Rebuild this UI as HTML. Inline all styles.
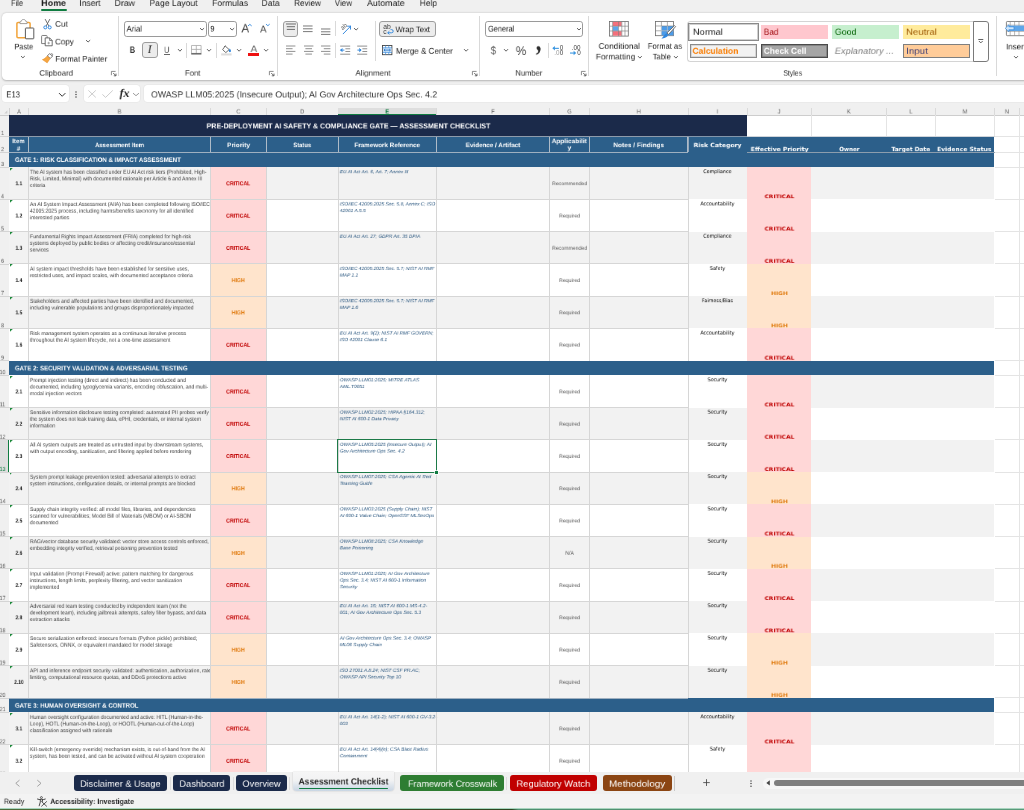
<!DOCTYPE html>
<html><head><meta charset="utf-8"><title>Assessment Checklist</title>
<style>
html,body{margin:0;padding:0;}
body{width:1024px;height:810px;overflow:hidden;background:#f0f0f0;font-family:"Liberation Sans",sans-serif;position:relative;color:#222;}
div,span,svg{position:absolute;box-sizing:border-box;}
svg{overflow:visible;}
.t{left:0;top:0;white-space:pre;line-height:1;transform-origin:0 0;will-change:transform;text-rendering:geometricPrecision;}
</style></head><body>
<!-- ===== ribbon / formula bar ===== -->
<div id="menubar" style="left:0;top:0;width:1024px;height:13px;background:#f0f0f0;"></div>
<span class="t" style="font-size:10.625px;color:#222;transform:translate(11.00px,-0.57px) scale(0.7072,0.8000);">File</span>
<span class="t" style="font-size:10.625px;color:#222;transform:translate(79.40px,-0.57px) scale(0.7986,0.8000);">Insert</span>
<span class="t" style="font-size:10.625px;color:#222;transform:translate(114.50px,-0.57px) scale(0.8278,0.8000);">Draw</span>
<span class="t" style="font-size:10.625px;color:#222;transform:translate(149.50px,-0.57px) scale(0.8055,0.8000);">Page Layout</span>
<span class="t" style="font-size:10.625px;color:#222;transform:translate(212.00px,-0.57px) scale(0.8141,0.8000);">Formulas</span>
<span class="t" style="font-size:10.625px;color:#222;transform:translate(261.50px,-0.57px) scale(0.8117,0.8000);">Data</span>
<span class="t" style="font-size:10.625px;color:#222;transform:translate(294.00px,-0.57px) scale(0.7759,0.8000);">Review</span>
<span class="t" style="font-size:10.625px;color:#222;transform:translate(334.70px,-0.57px) scale(0.7584,0.8000);">View</span>
<span class="t" style="font-size:10.625px;color:#222;transform:translate(367.00px,-0.57px) scale(0.8300,0.8000);">Automate</span>
<span class="t" style="font-size:10.625px;color:#222;transform:translate(419.70px,-0.57px) scale(0.7926,0.8000);">Help</span>
<span class="t" style="font-size:10.625px;color:#1e1e1e;font-weight:bold;transform:translate(41.20px,-0.57px) scale(0.8411,0.8000);">Home</span>
<div style="left:41.00px;top:8.60px;width:25.50px;height:2.20px;background:#107c41;border-radius:1.2px;"></div>
<div id="ribbon" style="left:1.5px;top:12.6px;width:1030px;height:67.2px;background:#fff;border-radius:4.5px 0 0 4.5px;box-shadow:0 0.6px 2px rgba(0,0,0,0.25);"></div>
<svg style="left:14.00px;top:17.50px;width:22.00px;height:23.00px" viewBox="0 0 22 23"><rect x="2.9" y="4.4" width="13.2" height="15.4" rx="1.2" fill="#fff" stroke="#f2a43a" stroke-width="1.5"/>
    <path d="M6 5.6V4.2C6 3.4 6.6 3.2 7.4 3.2C7.4 2 8.4 1.5 9.5 1.5C10.6 1.5 11.6 2 11.6 3.2C12.4 3.2 13 3.4 13 4.2V5.6Z" fill="#fff" stroke="#8a8a8a" stroke-width="0.8"/>
    <rect x="11.4" y="10" width="8.4" height="10.8" rx="0.6" fill="#fff" stroke="#5a5a5a" stroke-width="1"/></svg>
<span class="t" style="font-size:10.125px;color:#1c1c1c;transform:translate(14.50px,43.76px) scale(0.7193,0.8000);">Paste</span>
<svg style="left:21.20px;top:56.40px;width:3.80px;height:2.20px" viewBox="0 0 3.80 2.20"><path d="M0.3 0.4L1.90 1.80L3.50 0.4" fill="none" stroke="#444" stroke-width="0.85" stroke-linecap="round" stroke-linejoin="round"/></svg>
<svg style="left:42.50px;top:18.50px;width:9.00px;height:10.60px" viewBox="0 0 9 10.6"><path d="M2.3 0.4L5.6 6.6M6.7 0.4L3.4 6.6" stroke="#5a5a5a" stroke-width="0.85" fill="none" stroke-linecap="round"/>
    <circle cx="2.3" cy="8.4" r="1.5" fill="none" stroke="#2f86dd" stroke-width="1"/><circle cx="6.7" cy="8.4" r="1.5" fill="none" stroke="#2f86dd" stroke-width="1"/></svg>
<span class="t" style="font-size:10.125px;color:#1c1c1c;transform:translate(55.00px,20.96px) scale(0.8135,0.8000);">Cut</span>
<svg style="left:41.00px;top:35.40px;width:12.00px;height:11.40px" viewBox="0 0 12 11.4"><path d="M0.6 1.2C0.6 0.8 0.9 0.5 1.3 0.5H5.4C5.8 0.5 6.1 0.8 6.1 1.2V8.6H0.6Z" fill="#fff" stroke="#6a6a6a" stroke-width="0.85"/>
    <path d="M4.2 2.9H8.6L11.2 5.5V10.8H4.2Z" fill="#fff" stroke="#555" stroke-width="0.85" stroke-linejoin="round"/>
    <path d="M8.6 2.9V5.5H11.2" fill="none" stroke="#555" stroke-width="0.7"/><path d="M7.7 6.8V9.4M6.4 8.1H9" stroke="#777" stroke-width="0.6"/></svg>
<span class="t" style="font-size:10.125px;color:#1c1c1c;transform:translate(55.00px,38.76px) scale(0.7963,0.8000);">Copy</span>
<svg style="left:85.60px;top:40.20px;width:4.20px;height:2.40px" viewBox="0 0 4.20 2.40"><path d="M0.3 0.4L2.10 2.00L3.90 0.4" fill="none" stroke="#444" stroke-width="0.85" stroke-linecap="round" stroke-linejoin="round"/></svg>
<svg style="left:41.60px;top:53.20px;width:11.40px;height:10.40px" viewBox="0 0 11.4 10.4"><path d="M7.6 0.6L10.6 3.2L8.2 5.4L5.4 2.9Z" fill="#fff" stroke="#555" stroke-width="0.8" stroke-linejoin="round"/>
    <path d="M9 0.5L10.8 1.2L10.2 2.8" fill="none" stroke="#555" stroke-width="0.6"/>
    <path d="M5.2 3.1L8 5.6L5.2 9.8L0.5 6.6C2.4 6.2 3.8 4.8 5.2 3.1Z" fill="#f6a640" stroke="#e8902a" stroke-width="0.7" stroke-linejoin="round"/></svg>
<span class="t" style="font-size:10.125px;color:#1c1c1c;transform:translate(55.40px,55.96px) scale(0.7748,0.8000);">Format Painter</span>
<span class="t" style="font-size:9.75px;color:#2e2e2e;transform:translate(39.40px,69.97px) scale(0.8075,0.8000);">Clipboard</span>
<svg style="left:110.60px;top:70.80px;width:5.60px;height:5.20px" viewBox="0 0 5.6 5.2"><path d="M0.4 4.2V0.4H4.6" fill="none" stroke="#666" stroke-width="0.75"/><path d="M2.2 2L4.8 4.6M5 2.6V4.8H2.8" fill="none" stroke="#444" stroke-width="0.8"/></svg>
<div style="left:118.00px;top:16.30px;width:1.00px;height:59.30px;background:#d9d9d9;"></div>
<div style="left:124.20px;top:21.00px;width:82.40px;height:15.70px;border:1px solid #9a9a9a;border-radius:2.8px;background:#fff;"></div>
<span class="t" style="font-size:10.5px;color:#1c1c1c;transform:translate(126.60px,25.13px) scale(0.7328,0.8000);">Arial</span>
<svg style="left:200.20px;top:27.70px;width:4.10px;height:2.40px" viewBox="0 0 4.10 2.40"><path d="M0.3 0.4L2.05 2.00L3.80 0.4" fill="none" stroke="#444" stroke-width="0.85" stroke-linecap="round" stroke-linejoin="round"/></svg>
<div style="left:208.30px;top:21.00px;width:28.50px;height:15.70px;border:1px solid #9a9a9a;border-radius:2.8px;background:#fff;"></div>
<span class="t" style="font-size:10.5px;color:#1c1c1c;transform:translate(210.40px,25.13px) scale(0.6674,0.8000);">9</span>
<svg style="left:230.30px;top:27.70px;width:4.20px;height:2.40px" viewBox="0 0 4.20 2.40"><path d="M0.3 0.4L2.10 2.00L3.90 0.4" fill="none" stroke="#444" stroke-width="0.85" stroke-linecap="round" stroke-linejoin="round"/></svg>
<span class="t" style="font-size:15.25px;color:#444;transform:translate(241.40px,22.83px) scale(0.7668,0.8000);">A</span>
<svg style="left:248.40px;top:24.30px;width:3.70px;height:2.10px" viewBox="0 0 3.70 2.10"><path d="M0.3 1.70L1.85 0.4L3.40 1.70" fill="none" stroke="#2f86dd" stroke-width="0.90" stroke-linecap="round" stroke-linejoin="round"/></svg>
<span class="t" style="font-size:12.25px;color:#444;transform:translate(260.00px,24.47px) scale(0.7954,0.8000);">A</span>
<svg style="left:265.90px;top:24.30px;width:3.70px;height:2.10px" viewBox="0 0 3.70 2.10"><path d="M0.3 0.4L1.85 1.70L3.40 0.4" fill="none" stroke="#2f86dd" stroke-width="0.90" stroke-linecap="round" stroke-linejoin="round"/></svg>
<span class="t" style="font-size:11.75px;color:#3a3a3a;font-weight:bold;transform:translate(129.80px,45.68px) scale(0.6235,0.8000);">B</span>
<div style="left:141.50px;top:42.20px;width:16.50px;height:16.30px;border:1px solid #9c9c9c;border-radius:3px;background:#ececec;"></div>
<span class="t" style="font-size:14.375px;color:#222;font-style:italic;font-family:'Liberation Serif',serif;transform:translate(147.80px,44.11px) scale(0.7922,0.8000);">I</span>
<span class="t" style="font-size:11px;color:#555;transform:translate(164.00px,46.43px) scale(0.7041,0.8000);">U</span>
<div style="left:163.80px;top:54.00px;width:6.00px;height:0.80px;background:#666;"></div>
<svg style="left:177.70px;top:49.30px;width:3.90px;height:2.60px" viewBox="0 0 3.90 2.60"><path d="M0.3 0.4L1.95 2.20L3.60 0.4" fill="none" stroke="#444" stroke-width="0.85" stroke-linecap="round" stroke-linejoin="round"/></svg>
<div style="left:186.30px;top:42.80px;width:1.00px;height:15.00px;background:#d9d9d9;"></div>
<svg style="left:191.00px;top:45.30px;width:10.60px;height:9.60px" viewBox="0 0 10.6 9.6"><path d="M0.5 0.5H10.1V8.4H0.5ZM5.3 0.5V8.4M0.5 4.4H10.1" fill="none" stroke="#a8a8a8" stroke-width="0.8"/><path d="M0.2 8.9H10.4" stroke="#444" stroke-width="1.1"/></svg>
<svg style="left:207.00px;top:49.30px;width:4.10px;height:2.60px" viewBox="0 0 4.10 2.60"><path d="M0.3 0.4L2.05 2.20L3.80 0.4" fill="none" stroke="#444" stroke-width="0.85" stroke-linecap="round" stroke-linejoin="round"/></svg>
<div style="left:216.00px;top:42.80px;width:1.00px;height:15.00px;background:#d9d9d9;"></div>
<svg style="left:221.00px;top:44.80px;width:11.00px;height:10.60px" viewBox="0 0 11 10.6"><path d="M4.2 1L8.2 4.6L4.8 7.6L1.6 4.6Z" fill="#fff" stroke="#555" stroke-width="0.85" stroke-linejoin="round"/><path d="M3 2L4.6 0.6" stroke="#555" stroke-width="0.7"/>
    <path d="M8.8 3.6C9.6 4.8 10 5.5 10 6.1A1.1 1.1 0 0 1 7.8 6.1C7.8 5.5 8.2 4.8 8.8 3.6Z" fill="#2f86dd"/><rect x="0.2" y="8.4" width="10.4" height="2.1" fill="#dcdcdc"/></svg>
<svg style="left:236.60px;top:49.30px;width:4.20px;height:2.60px" viewBox="0 0 4.20 2.60"><path d="M0.3 0.4L2.10 2.20L3.90 0.4" fill="none" stroke="#444" stroke-width="0.85" stroke-linecap="round" stroke-linejoin="round"/></svg>
<span class="t" style="font-size:12px;color:#555;transform:translate(250.60px,44.12px) scale(0.8234,0.8000);">A</span>
<div style="left:248.30px;top:53.10px;width:10.80px;height:2.50px;background:#ee1111;"></div>
<svg style="left:264.10px;top:49.30px;width:4.20px;height:2.60px" viewBox="0 0 4.20 2.60"><path d="M0.3 0.4L2.10 2.20L3.90 0.4" fill="none" stroke="#444" stroke-width="0.85" stroke-linecap="round" stroke-linejoin="round"/></svg>
<span class="t" style="font-size:9.75px;color:#2e2e2e;transform:translate(184.90px,69.97px) scale(0.7994,0.8000);">Font</span>
<svg style="left:269.30px;top:70.80px;width:5.60px;height:5.20px" viewBox="0 0 5.6 5.2"><path d="M0.4 4.2V0.4H4.6" fill="none" stroke="#666" stroke-width="0.75"/><path d="M2.2 2L4.8 4.6M5 2.6V4.8H2.8" fill="none" stroke="#444" stroke-width="0.8"/></svg>
<div style="left:276.50px;top:16.30px;width:1.00px;height:59.30px;background:#d9d9d9;"></div>
<div style="left:282.90px;top:21.00px;width:15.60px;height:15.70px;border:1px solid #9c9c9c;border-radius:3px;background:#ececec;"></div>
<svg style="left:285.80px;top:23.00px;width:10.00px;height:7.40px" viewBox="0 0 10 7.4"><path d="M0.00 1.00H10.00" stroke="#555" stroke-width="0.85"/><path d="M0.80 3.70H9.00" stroke="#555" stroke-width="0.85"/><path d="M0.80 6.40H9.00" stroke="#555" stroke-width="0.85"/></svg>
<svg style="left:303.30px;top:24.70px;width:9.60px;height:7.60px" viewBox="0 0 9.6 7.6"><path d="M0.00 1.00H9.60" stroke="#6a6a6a" stroke-width="0.90"/><path d="M0.00 3.80H9.60" stroke="#6a6a6a" stroke-width="0.90"/><path d="M0.00 6.60H9.60" stroke="#6a6a6a" stroke-width="0.90"/></svg>
<svg style="left:321.00px;top:27.50px;width:9.40px;height:7.40px" viewBox="0 0 9.4 7.4"><path d="M0.00 1.00H9.40" stroke="#6a6a6a" stroke-width="0.90"/><path d="M0.00 3.80H9.40" stroke="#6a6a6a" stroke-width="0.90"/><path d="M0.00 6.40H9.40" stroke="#6a6a6a" stroke-width="0.90"/></svg>
<div style="left:334.90px;top:21.30px;width:1.00px;height:15.20px;background:#d9d9d9;"></div>
<svg style="left:339.60px;top:22.80px;width:11.40px;height:11.40px" viewBox="0 0 11.4 11.4"><text x="1" y="6" font-size="6.2" font-family="Liberation Sans, sans-serif" fill="#555" transform="rotate(-40 3.4 4.6)">ab</text>
    <path d="M3.2 10.8L10.4 3.4M10.5 3.2H7.5M10.5 3.2V6.2" fill="none" stroke="#2f86dd" stroke-width="0.95" stroke-linecap="round"/></svg>
<svg style="left:354.10px;top:27.70px;width:4.20px;height:2.40px" viewBox="0 0 4.20 2.40"><path d="M0.3 0.4L2.10 2.00L3.90 0.4" fill="none" stroke="#444" stroke-width="0.85" stroke-linecap="round" stroke-linejoin="round"/></svg>
<svg style="left:286.00px;top:45.10px;width:9.40px;height:10.10px" viewBox="0 0 9.4 10.1"><path d="M0.00 1.00H9.40" stroke="#8a8a8a" stroke-width="0.95"/><path d="M0.00 3.70H6.60" stroke="#8a8a8a" stroke-width="0.95"/><path d="M0.00 6.40H9.40" stroke="#8a8a8a" stroke-width="0.95"/><path d="M0.00 9.10H6.60" stroke="#8a8a8a" stroke-width="0.95"/></svg>
<svg style="left:303.50px;top:45.10px;width:9.40px;height:10.10px" viewBox="0 0 9.4 10.1"><path d="M0.00 1.00H9.40" stroke="#8a8a8a" stroke-width="0.95"/><path d="M1.40 3.70H8.00" stroke="#8a8a8a" stroke-width="0.95"/><path d="M0.00 6.40H9.40" stroke="#8a8a8a" stroke-width="0.95"/><path d="M1.40 9.10H8.00" stroke="#8a8a8a" stroke-width="0.95"/></svg>
<svg style="left:321.00px;top:45.10px;width:9.40px;height:10.10px" viewBox="0 0 9.4 10.1"><path d="M0.00 1.00H9.40" stroke="#8a8a8a" stroke-width="0.95"/><path d="M2.80 3.70H9.40" stroke="#8a8a8a" stroke-width="0.95"/><path d="M0.00 6.40H9.40" stroke="#8a8a8a" stroke-width="0.95"/><path d="M2.80 9.10H9.40" stroke="#8a8a8a" stroke-width="0.95"/></svg>
<div style="left:334.90px;top:42.80px;width:1.00px;height:15.00px;background:#d9d9d9;"></div>
<svg style="left:340.00px;top:45.00px;width:10.40px;height:10.20px" viewBox="0 0 10.4 10.2"><path d="M0.2 1.1H10.2M5.4 3.8H10.2M5.4 6.5H10.2M0.2 9.2H10.2" stroke="#8a8a8a" stroke-width="0.95"/>
    <path d="M4.4 5.1H0.7M2.2 3.5L0.6 5.1L2.2 6.7" fill="none" stroke="#2f86dd" stroke-width="0.95" stroke-linejoin="round"/><path d="M0.4 5.1L2.4 3.4V6.8Z" fill="#2f86dd"/></svg>
<svg style="left:357.40px;top:45.00px;width:10.40px;height:10.20px" viewBox="0 0 10.4 10.2"><path d="M0.2 1.1H10.2M5.4 3.8H10.2M5.4 6.5H10.2M0.2 9.2H10.2" stroke="#8a8a8a" stroke-width="0.95"/>
    <path d="M0.4 5.1H4M2.4 3.5L4.1 5.1L2.4 6.7" fill="none" stroke="#2f86dd" stroke-width="0.95"/><path d="M4.4 5.1L2.4 3.4V6.8Z" fill="#2f86dd"/></svg>
<div style="left:374.50px;top:20.60px;width:1.00px;height:40.60px;background:#d9d9d9;"></div>
<div style="left:379.30px;top:21.00px;width:57.20px;height:15.70px;border:1px solid #9c9c9c;border-radius:3px;background:#ececec;"></div>
<svg style="left:383.20px;top:24.00px;width:10.40px;height:10.80px" viewBox="0 0 10.4 10.8"><text x="0.2" y="5.2" font-size="6.8" font-family="Liberation Sans, sans-serif" fill="#3c3c3c">ab</text>
    <text x="0.2" y="10.2" font-size="6.8" font-family="Liberation Sans, sans-serif" fill="#3c3c3c">c</text>
    <path d="M7.6 5.6H8.6A1.5 1.5 0 0 1 8.6 8.8H4.8M6.4 7.2L4.7 8.8L6.4 10.4" fill="none" stroke="#2f86dd" stroke-width="0.95" stroke-linejoin="round"/></svg>
<span class="t" style="font-size:10.375px;color:#1c1c1c;transform:translate(395.60px,26.56px) scale(0.7435,0.8000);">Wrap Text</span>
<svg style="left:382.00px;top:44.80px;width:10.40px;height:10.20px" viewBox="0 0 10.4 10.2"><rect x="0.5" y="0.5" width="9.4" height="9.2" fill="#fff" stroke="#444" stroke-width="0.9"/>
    <rect x="0.9" y="3" width="8.6" height="4.2" fill="#cfe5fa"/>
    <path d="M0.5 2.8H9.9M0.5 7.4H9.9M3.6 0.5V2.8M6.8 0.5V2.8M3.6 7.4V9.7M6.8 7.4V9.7" fill="none" stroke="#2f86dd" stroke-width="0.7"/>
    <path d="M2 5.1H8.4M3.2 4L2 5.1L3.2 6.2M7.2 4L8.4 5.1L7.2 6.2" fill="none" stroke="#1e6fc4" stroke-width="0.8"/></svg>
<span class="t" style="font-size:10.375px;color:#1c1c1c;transform:translate(395.90px,48.06px) scale(0.7781,0.8000);">Merge &amp; Center</span>
<svg style="left:464.20px;top:49.30px;width:4.20px;height:2.60px" viewBox="0 0 4.20 2.60"><path d="M0.3 0.4L2.10 2.20L3.90 0.4" fill="none" stroke="#444" stroke-width="0.85" stroke-linecap="round" stroke-linejoin="round"/></svg>
<span class="t" style="font-size:9.75px;color:#2e2e2e;transform:translate(355.50px,69.97px) scale(0.8072,0.8000);">Alignment</span>
<svg style="left:472.20px;top:70.80px;width:5.60px;height:5.20px" viewBox="0 0 5.6 5.2"><path d="M0.4 4.2V0.4H4.6" fill="none" stroke="#666" stroke-width="0.75"/><path d="M2.2 2L4.8 4.6M5 2.6V4.8H2.8" fill="none" stroke="#444" stroke-width="0.8"/></svg>
<div style="left:478.90px;top:16.30px;width:1.00px;height:59.30px;background:#d9d9d9;"></div>
<div style="left:485.40px;top:21.00px;width:98.10px;height:15.70px;border:1px solid #9a9a9a;border-radius:2.8px;background:#fff;"></div>
<span class="t" style="font-size:10.5px;color:#1c1c1c;transform:translate(488.00px,25.13px) scale(0.7013,0.8000);">General</span>
<svg style="left:577.00px;top:27.70px;width:4.00px;height:2.40px" viewBox="0 0 4.00 2.40"><path d="M0.3 0.4L2.00 2.00L3.70 0.4" fill="none" stroke="#444" stroke-width="0.85" stroke-linecap="round" stroke-linejoin="round"/></svg>
<span class="t" style="font-size:14.25px;color:#444;transform:translate(490.80px,45.54px) scale(0.6551,0.8000);">$</span>
<svg style="left:503.80px;top:49.40px;width:4.10px;height:2.60px" viewBox="0 0 4.10 2.60"><path d="M0.3 0.4L2.05 2.20L3.80 0.4" fill="none" stroke="#444" stroke-width="0.85" stroke-linecap="round" stroke-linejoin="round"/></svg>
<span class="t" style="font-size:15.5px;color:#444;transform:translate(515.80px,45.33px) scale(0.7538,0.8000);">%</span>
<span class="t" style="font-size:36.25px;color:#2e2e2e;font-weight:bold;font-family:'Liberation Serif',serif;transform:translate(535.80px,26.40px) scale(0.6179,0.8000);">,</span>
<div style="left:547.80px;top:42.80px;width:1.00px;height:15.00px;background:#d9d9d9;"></div>
<svg style="left:552.00px;top:44.50px;width:12.00px;height:11.00px" viewBox="0 0 12 11"><path d="M6.9 3.35H1.2" fill="none" stroke="#3a96e0" stroke-width="1.1"/><path d="M0.3 3.35L2.9 1.1V5.6Z" fill="#3a96e0"/>
<text x="7.7" y="4.7" font-size="6.3" font-family="Liberation Sans, sans-serif" fill="#3c3c3c">0</text>
<text x="2.2" y="10.3" font-size="6.3" font-family="Liberation Sans, sans-serif" fill="#9a9a9a">.0</text><text x="7.7" y="10.3" font-size="6.3" font-family="Liberation Sans, sans-serif" fill="#3c3c3c">0</text></svg>
<svg style="left:570.00px;top:44.50px;width:12.00px;height:11.00px" viewBox="0 0 12 11"><text x="1.7" y="4.8" font-size="6.3" font-family="Liberation Sans, sans-serif" fill="#3c3c3c">.00</text>
<path d="M0 8.05H5" fill="none" stroke="#3a96e0" stroke-width="1.1"/><path d="M6.2 8.05L3.6 5.8V10.3Z" fill="#3a96e0"/>
<text x="7.3" y="10.3" font-size="6.3" font-family="Liberation Sans, sans-serif" fill="#3c3c3c">0</text></svg>
<span class="t" style="font-size:9.75px;color:#2e2e2e;transform:translate(515.40px,69.97px) scale(0.7755,0.8000);">Number</span>
<svg style="left:581.00px;top:70.80px;width:5.60px;height:5.20px" viewBox="0 0 5.6 5.2"><path d="M0.4 4.2V0.4H4.6" fill="none" stroke="#666" stroke-width="0.75"/><path d="M2.2 2L4.8 4.6M5 2.6V4.8H2.8" fill="none" stroke="#444" stroke-width="0.8"/></svg>
<div style="left:588.00px;top:16.30px;width:1.00px;height:59.30px;background:#d9d9d9;"></div>
<svg style="left:609.40px;top:20.50px;width:19.80px;height:15.60px" viewBox="0 0 19.8 15.6"><rect x="0.5" y="0.5" width="18.8" height="14.6" fill="#fff" stroke="#6a6a6a" stroke-width="0.8"/>
    <rect x="3.8" y="0.9" width="8.8" height="4.2" fill="#f4707c"/><rect x="3.8" y="5.4" width="5.6" height="4.4" fill="#5ea6ea"/><rect x="3.8" y="10.2" width="8.8" height="4.5" fill="#f4707c"/>
    <path d="M3.6 0.5V15.1M9.6 0.5V15.1M12.8 0.5V15.1M16 0.5V15.1M0.5 5.2H19.3M0.5 10H19.3" stroke="#7a7a7a" stroke-width="0.6" fill="none"/></svg>
<span class="t" style="font-size:10.125px;color:#1c1c1c;transform:translate(598.60px,43.11px) scale(0.8163,0.8000);">Conditional</span>
<span class="t" style="font-size:10.125px;color:#1c1c1c;transform:translate(595.80px,53.76px) scale(0.8173,0.8000);">Formatting</span>
<svg style="left:637.70px;top:55.60px;width:3.80px;height:2.50px" viewBox="0 0 3.80 2.50"><path d="M0.3 0.4L1.90 2.10L3.50 0.4" fill="none" stroke="#444" stroke-width="0.85" stroke-linecap="round" stroke-linejoin="round"/></svg>
<svg style="left:655.20px;top:20.50px;width:21.00px;height:18.60px" viewBox="0 0 21 18.6"><rect x="0.5" y="0.5" width="18" height="14.2" fill="#fff" stroke="#6a6a6a" stroke-width="0.8"/>
    <rect x="6.4" y="5" width="12" height="9.4" fill="#4c9be8"/>
    <path d="M6.4 0.5V14.7M12.4 0.5V14.7M0.5 5H18.5M0.5 9.8H18.5" stroke="#7a7a7a" stroke-width="0.6" fill="none"/>
    <path d="M6.4 5V14.4M12.4 5V14.4M6.4 9.8H18.4" stroke="#cfe5fa" stroke-width="0.5" fill="none"/>
    <path d="M19.6 4.6L20.6 5.6L13.6 13.4L11.8 12Z" fill="#fff" stroke="#555" stroke-width="0.8" stroke-linejoin="round"/>
    <path d="M13.2 13.6C12.6 16.4 9.6 17.8 6.4 17.4C8.6 16.2 8.8 13.4 11.4 12.2Z" fill="#2f86dd"/></svg>
<span class="t" style="font-size:10.125px;color:#1c1c1c;transform:translate(647.80px,43.11px) scale(0.7514,0.8000);">Format as</span>
<span class="t" style="font-size:10.125px;color:#1c1c1c;transform:translate(652.80px,53.76px) scale(0.7447,0.8000);">Table</span>
<svg style="left:673.60px;top:55.60px;width:3.80px;height:2.50px" viewBox="0 0 3.80 2.50"><path d="M0.3 0.4L1.90 2.10L3.50 0.4" fill="none" stroke="#444" stroke-width="0.85" stroke-linecap="round" stroke-linejoin="round"/></svg>
<div style="left:686.60px;top:21.20px;width:287.40px;height:41.00px;border:1px solid #d4d4d4;border-right:none;border-radius:3.5px 0 0 3.5px;background:#fff;"></div>
<div style="left:973.20px;top:21.00px;width:15.60px;height:41.30px;border:1px solid #7a7a7a;border-radius:0 3px 3px 0;background:#fff;"></div>
<svg style="left:977.80px;top:38.60px;width:5.60px;height:4.40px" viewBox="0 0 5.6 4.4"><path d="M0.3 0.5H5.3" stroke="#444" stroke-width="0.85"/><path d="M0.9 2L2.8 3.9L4.7 2" fill="none" stroke="#444" stroke-width="0.85" stroke-linejoin="round"/></svg>
<div style="left:687.60px;top:22.90px;width:71.20px;height:18.60px;border:1.2px solid #8a8a8a;background:#fff;box-shadow:inset 0 0 0 1px #d0d0d0;"></div>
<span class="t" style="font-size:10.875px;color:#222;transform:translate(692.90px,28.33px) scale(0.8571,0.8000);">Normal</span>
<div style="left:760.70px;top:25.00px;width:67.10px;height:14.40px;background:#ffc7ce;"></div>
<span class="t" style="font-size:10.875px;color:#9c0006;transform:translate(763.80px,28.33px) scale(0.7605,0.8000);">Bad</span>
<div style="left:831.90px;top:25.00px;width:67.10px;height:14.40px;background:#c6efce;"></div>
<span class="t" style="font-size:10.875px;color:#006100;transform:translate(834.80px,28.33px) scale(0.8165,0.8000);">Good</span>
<div style="left:903.20px;top:25.00px;width:67.20px;height:14.40px;background:#ffeb9c;"></div>
<span class="t" style="font-size:10.875px;color:#9c5700;transform:translate(906.00px,28.33px) scale(0.8825,0.8000);">Neutral</span>
<div style="left:689.50px;top:43.60px;width:67.50px;height:14.90px;border:1px solid #8a8a8a;background:#f2f2f2;box-shadow:inset 0 0 0 0.8px #cfcfcf;"></div>
<span class="t" style="font-size:10.875px;color:#fa7d00;font-weight:bold;transform:translate(692.50px,47.38px) scale(0.7825,0.8000);">Calculation</span>
<div style="left:760.70px;top:43.70px;width:67.10px;height:14.80px;border:1.6px solid #4a4a4a;background:#a5a5a5;box-shadow:inset 0 0 0 0.7px #7a7a7a;"></div>
<span class="t" style="font-size:10.875px;color:#fff;font-weight:bold;transform:translate(763.80px,47.38px) scale(0.7653,0.8000);">Check Cell</span>
<span class="t" style="font-size:10.875px;color:#7f7f7f;font-style:italic;transform:translate(834.80px,47.39px) scale(0.8499,0.8000);">Explanatory ...</span>
<div style="left:903.20px;top:43.70px;width:67.20px;height:14.80px;border:1px solid #7f7f7f;background:#ffcc99;"></div>
<span class="t" style="font-size:10.875px;color:#3f3f76;transform:translate(906.20px,47.38px) scale(0.8942,0.8000);">Input</span>
<span class="t" style="font-size:9.75px;color:#2e2e2e;transform:translate(783.30px,69.97px) scale(0.7040,0.8000);">Styles</span>
<div style="left:996.10px;top:16.30px;width:1.00px;height:59.30px;background:#d9d9d9;"></div>
<svg style="left:1005.00px;top:20.80px;width:20.00px;height:15.20px" viewBox="0 0 20 15.2"><rect x="1.4" y="0.5" width="19" height="14.2" rx="0.8" fill="#fff" stroke="#6a6a6a" stroke-width="0.8"/>
    <path d="M5.2 0.5V14.7M9.6 0.5V14.7M14 0.5V14.7M1.4 4.2H20M1.4 10.4H20" stroke="#8a8a8a" stroke-width="0.6" fill="none"/>
    <rect x="4" y="4.6" width="16" height="5.4" fill="#5ea6ea"/>
    <path d="M0.3 7.3L3.8 3.8V5.8H9V8.8H3.8V10.8Z" fill="#cfe5fa" stroke="#2f86dd" stroke-width="0.7" stroke-linejoin="round"/></svg>
<span class="t" style="font-size:10.125px;color:#1c1c1c;transform:translate(1006.00px,43.76px) scale(0.7906,0.8000);">Insert</span>
<svg style="left:1013.50px;top:56.00px;width:4.00px;height:2.50px" viewBox="0 0 4.00 2.50"><path d="M0.3 0.4L2.00 2.10L3.70 0.4" fill="none" stroke="#444" stroke-width="0.85" stroke-linecap="round" stroke-linejoin="round"/></svg>
<div style="left:1.60px;top:85.40px;width:67.70px;height:16.90px;background:#fff;border-radius:3.5px;box-shadow:0 0 0 0.6px #e4e4e4;"></div>
<span class="t" style="font-size:11.125px;color:#333;transform:translate(6.30px,91.02px) scale(0.6926,0.8000);">E13</span>
<svg style="left:58.80px;top:92.90px;width:6.40px;height:3.70px" viewBox="0 0 6.40 3.70"><path d="M0.3 0.4L3.20 3.30L6.10 0.4" fill="none" stroke="#333" stroke-width="1.00" stroke-linecap="round" stroke-linejoin="round"/></svg>
<svg style="left:75.40px;top:91.00px;width:2.00px;height:7.00px" viewBox="0 0 2 7"><circle cx="1" cy="0.9" r="0.75" fill="#444"/><circle cx="1" cy="3.5" r="0.75" fill="#444"/><circle cx="1" cy="6.1" r="0.75" fill="#444"/></svg>
<div style="left:83.70px;top:85.40px;width:56.60px;height:16.90px;background:#fff;border-radius:3.5px;box-shadow:0 0 0 0.6px #e4e4e4;"></div>
<svg style="left:87.80px;top:90.40px;width:8.20px;height:7.80px" viewBox="0 0 8.2 7.8"><path d="M0.4 0.4L7.8 7.4M7.8 0.4L0.4 7.4" stroke="#c6c6c6" stroke-width="0.9"/></svg>
<svg style="left:102.20px;top:90.40px;width:11.20px;height:7.80px" viewBox="0 0 11.2 7.8"><path d="M0.4 4.4L3.6 7.4L10.8 0.4" fill="none" stroke="#c6c6c6" stroke-width="0.9"/></svg>
<span class="t" style="font-size:14.5px;color:#222;font-weight:bold;font-style:italic;font-family:'Liberation Serif',serif;transform:translate(119.60px,88.15px) scale(0.8103,0.8000);">fx</span>
<svg style="left:132.90px;top:92.90px;width:6.00px;height:3.10px" viewBox="0 0 6.00 3.10"><path d="M0.3 0.4L3.00 2.70L5.70 0.4" fill="none" stroke="#8a8a8a" stroke-width="0.85" stroke-linecap="round" stroke-linejoin="round"/></svg>
<div style="left:144.00px;top:85.40px;width:896.00px;height:16.90px;background:#fff;border-radius:3.5px;box-shadow:0 0 0 0.6px #e4e4e4;"></div>
<span class="t" style="font-size:11.125px;color:#333;transform:translate(151.00px,91.02px) scale(0.7869,0.8000);">OWASP LLM05:2025 (Insecure Output); AI Gov Architecture Ops Sec. 4.2</span>
<!-- ===== grid ===== -->
<div id="gridclip" style="left:0;top:103px;width:1024px;height:669.4px;overflow:hidden;"><div style="left:0;top:-103px;width:1024px;height:810px;">
<div style="left:0.00px;top:103.00px;width:1024.00px;height:669.40px;background:#fff;"></div>
<div style="left:0.00px;top:103.00px;width:1024.00px;height:12.30px;background:#f0f0f0;"></div>
<div style="left:0.00px;top:115.00px;width:9.40px;height:657.40px;background:#f0f0f0;"></div>
<svg style="left:4.00px;top:109.60px;width:3.60px;height:3.80px" viewBox="0 0 3.6 3.8"><path d="M3.4 0.2V3.6H0.2Z" fill="#cfcfcf"/></svg>
<span class="t" style="font-size:7.5px;color:#5e5e5e;transform:translate(17.09px,108.70px) scale(0.7600,0.8000);">A</span>
<div style="left:28.10px;top:108.40px;width:1.00px;height:6.90px;background:#dadada;"></div>
<span class="t" style="font-size:7.5px;color:#5e5e5e;transform:translate(117.64px,108.70px) scale(0.7600,0.8000);">B</span>
<div style="left:210.00px;top:108.40px;width:1.00px;height:6.90px;background:#dadada;"></div>
<span class="t" style="font-size:7.5px;color:#5e5e5e;transform:translate(236.44px,108.70px) scale(0.7600,0.8000);">C</span>
<div style="left:266.00px;top:108.40px;width:1.00px;height:6.90px;background:#dadada;"></div>
<span class="t" style="font-size:7.5px;color:#5e5e5e;transform:translate(300.19px,108.70px) scale(0.7600,0.8000);">D</span>
<div style="left:337.50px;top:108.40px;width:1.00px;height:6.90px;background:#dadada;"></div>
<div style="left:338.00px;top:107.60px;width:98.50px;height:7.70px;background:#dedede;border-bottom:1.2px solid #107c41;"></div>
<span class="t" style="font-size:7.5px;color:#107c41;font-weight:bold;transform:translate(385.34px,108.69px) scale(0.7600,0.8000);">E</span>
<div style="left:436.00px;top:108.40px;width:1.00px;height:6.90px;background:#dadada;"></div>
<span class="t" style="font-size:7.5px;color:#5e5e5e;transform:translate(491.25px,108.70px) scale(0.7600,0.8000);">F</span>
<div style="left:549.00px;top:108.40px;width:1.00px;height:6.90px;background:#dadada;"></div>
<span class="t" style="font-size:7.5px;color:#5e5e5e;transform:translate(567.28px,108.70px) scale(0.7600,0.8000);">G</span>
<div style="left:589.00px;top:108.40px;width:1.00px;height:6.90px;background:#dadada;"></div>
<span class="t" style="font-size:7.5px;color:#5e5e5e;transform:translate(636.69px,108.70px) scale(0.7600,0.8000);">H</span>
<div style="left:687.50px;top:108.40px;width:1.00px;height:6.90px;background:#dadada;"></div>
<span class="t" style="font-size:7.5px;color:#5e5e5e;transform:translate(716.70px,108.70px) scale(0.7600,0.8000);">I</span>
<div style="left:746.50px;top:108.40px;width:1.00px;height:6.90px;background:#dadada;"></div>
<span class="t" style="font-size:7.5px;color:#5e5e5e;transform:translate(777.68px,108.70px) scale(0.7600,0.8000);">J</span>
<div style="left:810.70px;top:108.40px;width:1.00px;height:6.90px;background:#dadada;"></div>
<span class="t" style="font-size:7.5px;color:#5e5e5e;transform:translate(846.94px,108.70px) scale(0.7600,0.8000);">K</span>
<div style="left:886.00px;top:108.40px;width:1.00px;height:6.90px;background:#dadada;"></div>
<span class="t" style="font-size:7.5px;color:#5e5e5e;transform:translate(909.41px,108.70px) scale(0.7600,0.8000);">L</span>
<div style="left:935.00px;top:108.40px;width:1.00px;height:6.90px;background:#dadada;"></div>
<span class="t" style="font-size:7.5px;color:#5e5e5e;transform:translate(962.62px,108.70px) scale(0.7600,0.8000);">M</span>
<div style="left:994.00px;top:108.40px;width:1.00px;height:6.90px;background:#dadada;"></div>
<span class="t" style="font-size:7.5px;color:#5e5e5e;transform:translate(1004.89px,108.70px) scale(0.7600,0.8000);">N</span>
<div style="left:1018.90px;top:108.40px;width:1.00px;height:6.90px;background:#dadada;"></div>
<div style="left:8.90px;top:108.40px;width:1.00px;height:6.90px;background:#d2d2d2;"></div>
<div style="left:0.00px;top:114.90px;width:1024.00px;height:0.70px;background:#cdcdcd;"></div>
<span class="t" style="font-size:7.5px;color:#5a5a5a;transform:translate(1.00px,130.30px) scale(0.7200,0.8000);">1</span>
<div style="left:0.00px;top:135.80px;width:9.40px;height:0.80px;background:#d4d4d4;"></div>
<span class="t" style="font-size:7.5px;color:#5a5a5a;transform:translate(1.00px,146.40px) scale(0.7200,0.8000);">2</span>
<div style="left:0.00px;top:151.90px;width:9.40px;height:0.80px;background:#d4d4d4;"></div>
<span class="t" style="font-size:7.5px;color:#5a5a5a;transform:translate(1.00px,161.20px) scale(0.7200,0.8000);">3</span>
<div style="left:0.00px;top:166.70px;width:9.40px;height:0.80px;background:#d4d4d4;"></div>
<span class="t" style="font-size:7.5px;color:#5a5a5a;transform:translate(1.00px,193.47px) scale(0.7200,0.8000);">4</span>
<div style="left:0.00px;top:198.97px;width:9.40px;height:0.80px;background:#d4d4d4;"></div>
<span class="t" style="font-size:7.5px;color:#5a5a5a;transform:translate(1.00px,225.74px) scale(0.7200,0.8000);">5</span>
<div style="left:0.00px;top:231.24px;width:9.40px;height:0.80px;background:#d4d4d4;"></div>
<span class="t" style="font-size:7.5px;color:#5a5a5a;transform:translate(1.00px,258.01px) scale(0.7200,0.8000);">6</span>
<div style="left:0.00px;top:263.51px;width:9.40px;height:0.80px;background:#d4d4d4;"></div>
<span class="t" style="font-size:7.5px;color:#5a5a5a;transform:translate(1.00px,290.28px) scale(0.7200,0.8000);">7</span>
<div style="left:0.00px;top:295.78px;width:9.40px;height:0.80px;background:#d4d4d4;"></div>
<span class="t" style="font-size:7.5px;color:#5a5a5a;transform:translate(1.00px,322.55px) scale(0.7200,0.8000);">8</span>
<div style="left:0.00px;top:328.05px;width:9.40px;height:0.80px;background:#d4d4d4;"></div>
<span class="t" style="font-size:7.5px;color:#5a5a5a;transform:translate(1.00px,354.82px) scale(0.7200,0.8000);">9</span>
<div style="left:0.00px;top:360.32px;width:9.40px;height:0.80px;background:#d4d4d4;"></div>
<span class="t" style="font-size:7.5px;color:#5a5a5a;transform:translate(-0.50px,369.37px) scale(0.7200,0.8000);">10</span>
<div style="left:0.00px;top:374.87px;width:9.40px;height:0.80px;background:#d4d4d4;"></div>
<span class="t" style="font-size:7.5px;color:#5a5a5a;transform:translate(-0.31px,401.64px) scale(0.7200,0.8000);">11</span>
<div style="left:0.00px;top:407.14px;width:9.40px;height:0.80px;background:#d4d4d4;"></div>
<span class="t" style="font-size:7.5px;color:#5a5a5a;transform:translate(-0.50px,433.91px) scale(0.7200,0.8000);">12</span>
<div style="left:0.00px;top:439.41px;width:9.40px;height:0.80px;background:#d4d4d4;"></div>
<div style="left:0.00px;top:439.81px;width:9.40px;height:32.27px;background:#dedede;border-right:1.2px solid #107c41;"></div>
<span class="t" style="font-size:7.5px;color:#107c41;transform:translate(-0.50px,466.18px) scale(0.7200,0.8000);">13</span>
<div style="left:0.00px;top:471.68px;width:9.40px;height:0.80px;background:#d4d4d4;"></div>
<span class="t" style="font-size:7.5px;color:#5a5a5a;transform:translate(-0.50px,498.45px) scale(0.7200,0.8000);">14</span>
<div style="left:0.00px;top:503.95px;width:9.40px;height:0.80px;background:#d4d4d4;"></div>
<span class="t" style="font-size:7.5px;color:#5a5a5a;transform:translate(-0.50px,530.72px) scale(0.7200,0.8000);">15</span>
<div style="left:0.00px;top:536.22px;width:9.40px;height:0.80px;background:#d4d4d4;"></div>
<span class="t" style="font-size:7.5px;color:#5a5a5a;transform:translate(-0.50px,562.99px) scale(0.7200,0.8000);">16</span>
<div style="left:0.00px;top:568.49px;width:9.40px;height:0.80px;background:#d4d4d4;"></div>
<span class="t" style="font-size:7.5px;color:#5a5a5a;transform:translate(-0.50px,595.26px) scale(0.7200,0.8000);">17</span>
<div style="left:0.00px;top:600.76px;width:9.40px;height:0.80px;background:#d4d4d4;"></div>
<span class="t" style="font-size:7.5px;color:#5a5a5a;transform:translate(-0.50px,627.53px) scale(0.7200,0.8000);">18</span>
<div style="left:0.00px;top:633.03px;width:9.40px;height:0.80px;background:#d4d4d4;"></div>
<span class="t" style="font-size:7.5px;color:#5a5a5a;transform:translate(-0.50px,659.80px) scale(0.7200,0.8000);">19</span>
<div style="left:0.00px;top:665.30px;width:9.40px;height:0.80px;background:#d4d4d4;"></div>
<span class="t" style="font-size:7.5px;color:#5a5a5a;transform:translate(-0.50px,692.07px) scale(0.7200,0.8000);">20</span>
<div style="left:0.00px;top:697.57px;width:9.40px;height:0.80px;background:#d4d4d4;"></div>
<span class="t" style="font-size:7.5px;color:#5a5a5a;transform:translate(-0.50px,706.37px) scale(0.7200,0.8000);">21</span>
<div style="left:0.00px;top:711.87px;width:9.40px;height:0.80px;background:#d4d4d4;"></div>
<span class="t" style="font-size:7.5px;color:#5a5a5a;transform:translate(-0.50px,738.64px) scale(0.7200,0.8000);">22</span>
<div style="left:0.00px;top:744.14px;width:9.40px;height:0.80px;background:#d4d4d4;"></div>
<span class="t" style="font-size:7.5px;color:#5a5a5a;transform:translate(-0.50px,770.91px) scale(0.7200,0.8000);">23</span>
<div style="left:0.00px;top:776.41px;width:9.40px;height:0.80px;background:#d4d4d4;"></div>
<div style="left:9.00px;top:115.30px;width:0.80px;height:657.10px;background:#cdcdcd;"></div>
<div style="left:810.70px;top:115.30px;width:1.00px;height:20.90px;background:#e4e4e4;"></div>
<div style="left:886.00px;top:115.30px;width:1.00px;height:20.90px;background:#e4e4e4;"></div>
<div style="left:935.00px;top:115.30px;width:1.00px;height:20.90px;background:#e4e4e4;"></div>
<div style="left:994.00px;top:115.30px;width:1.00px;height:20.90px;background:#e4e4e4;"></div>
<div style="left:1018.90px;top:115.30px;width:1.00px;height:20.90px;background:#e4e4e4;"></div>
<div style="left:1018.90px;top:115.30px;width:1.00px;height:657.10px;background:#e4e4e4;"></div>
<div style="left:994.50px;top:135.70px;width:29.50px;height:1.00px;background:#e4e4e4;"></div>
<div style="left:994.50px;top:151.80px;width:29.50px;height:1.00px;background:#e4e4e4;"></div>
<div style="left:994.50px;top:166.60px;width:29.50px;height:1.00px;background:#e4e4e4;"></div>
<div style="left:994.50px;top:198.87px;width:29.50px;height:1.00px;background:#e4e4e4;"></div>
<div style="left:994.50px;top:231.14px;width:29.50px;height:1.00px;background:#e4e4e4;"></div>
<div style="left:994.50px;top:263.41px;width:29.50px;height:1.00px;background:#e4e4e4;"></div>
<div style="left:994.50px;top:295.68px;width:29.50px;height:1.00px;background:#e4e4e4;"></div>
<div style="left:994.50px;top:327.95px;width:29.50px;height:1.00px;background:#e4e4e4;"></div>
<div style="left:994.50px;top:360.22px;width:29.50px;height:1.00px;background:#e4e4e4;"></div>
<div style="left:994.50px;top:374.77px;width:29.50px;height:1.00px;background:#e4e4e4;"></div>
<div style="left:994.50px;top:407.04px;width:29.50px;height:1.00px;background:#e4e4e4;"></div>
<div style="left:994.50px;top:439.31px;width:29.50px;height:1.00px;background:#e4e4e4;"></div>
<div style="left:994.50px;top:471.58px;width:29.50px;height:1.00px;background:#e4e4e4;"></div>
<div style="left:994.50px;top:503.85px;width:29.50px;height:1.00px;background:#e4e4e4;"></div>
<div style="left:994.50px;top:536.12px;width:29.50px;height:1.00px;background:#e4e4e4;"></div>
<div style="left:994.50px;top:568.39px;width:29.50px;height:1.00px;background:#e4e4e4;"></div>
<div style="left:994.50px;top:600.66px;width:29.50px;height:1.00px;background:#e4e4e4;"></div>
<div style="left:994.50px;top:632.93px;width:29.50px;height:1.00px;background:#e4e4e4;"></div>
<div style="left:994.50px;top:665.20px;width:29.50px;height:1.00px;background:#e4e4e4;"></div>
<div style="left:994.50px;top:697.47px;width:29.50px;height:1.00px;background:#e4e4e4;"></div>
<div style="left:994.50px;top:711.77px;width:29.50px;height:1.00px;background:#e4e4e4;"></div>
<div style="left:994.50px;top:744.04px;width:29.50px;height:1.00px;background:#e4e4e4;"></div>
<div style="left:9.40px;top:115.30px;width:737.60px;height:21.20px;background:#1b2a4a;"></div>
<span class="t" style="font-size:9px;color:#fff;font-weight:bold;transform:translate(206.60px,122.78px) scale(0.7850,0.8000);">PRE-DEPLOYMENT AI SAFETY &amp; COMPLIANCE GATE — ASSESSMENT CHECKLIST</span>
<div style="left:9.40px;top:136.20px;width:985.10px;height:16.10px;background:#2c5f8a;"></div>
<span class="t" style="font-size:8.125px;color:#fff;font-weight:bold;transform:translate(95.05px,142.39px) scale(0.7344,0.8000);">Assessment Item</span>
<span class="t" style="font-size:8.125px;color:#fff;font-weight:bold;transform:translate(227.05px,142.39px) scale(0.8062,0.8000);">Priority</span>
<span class="t" style="font-size:8.125px;color:#fff;font-weight:bold;transform:translate(293.35px,142.39px) scale(0.7178,0.8000);">Status</span>
<span class="t" style="font-size:8.125px;color:#fff;font-weight:bold;transform:translate(354.45px,142.39px) scale(0.7740,0.8000);">Framework Reference</span>
<span class="t" style="font-size:8.125px;color:#fff;font-weight:bold;transform:translate(465.70px,142.39px) scale(0.7748,0.8000);">Evidence / Artifact</span>
<span class="t" style="font-size:8.125px;color:#fff;font-weight:bold;transform:translate(613.35px,142.39px) scale(0.8054,0.8000);">Notes / Findings</span>
<span class="t" style="font-size:8.125px;color:#fff;font-weight:bold;transform:translate(12.20px,138.39px) scale(0.7491,0.8000);">Item</span>
<span class="t" style="font-size:8.125px;color:#fff;font-weight:bold;transform:translate(16.80px,145.99px) scale(0.7972,0.8000);">#</span>
<span class="t" style="font-size:8.125px;color:#fff;font-weight:bold;transform:translate(551.70px,138.39px) scale(0.8031,0.8000);">Applicabilit</span>
<span class="t" style="font-size:8.125px;color:#fff;font-weight:bold;transform:translate(567.60px,144.99px) scale(0.8194,0.8000);">y</span>
<div style="left:28.10px;top:136.20px;width:1.00px;height:16.10px;background:#aebbc8;"></div>
<div style="left:210.00px;top:136.20px;width:1.00px;height:16.10px;background:#aebbc8;"></div>
<div style="left:266.00px;top:136.20px;width:1.00px;height:16.10px;background:#aebbc8;"></div>
<div style="left:337.50px;top:136.20px;width:1.00px;height:16.10px;background:#aebbc8;"></div>
<div style="left:436.00px;top:136.20px;width:1.00px;height:16.10px;background:#aebbc8;"></div>
<div style="left:549.00px;top:136.20px;width:1.00px;height:16.10px;background:#aebbc8;"></div>
<div style="left:589.00px;top:136.20px;width:1.00px;height:16.10px;background:#aebbc8;"></div>
<div style="left:686.60px;top:136.20px;width:0.90px;height:16.10px;background:#aebbc8;"></div>
<div style="left:688.10px;top:136.20px;width:0.80px;height:16.10px;background:#93a7ba;"></div>
<div style="left:9.40px;top:135.80px;width:678.60px;height:0.90px;background:#8f9bab;"></div>
<div style="left:9.40px;top:151.80px;width:678.60px;height:0.90px;background:#a3b3c2;"></div>
<div style="left:688.00px;top:136.00px;width:59.00px;height:0.80px;background:#8496ab;"></div>
<span class="t" style="font-size:7.375px;color:#fff;font-weight:bold;font-family:'DejaVu Sans','Liberation Sans',sans-serif;transform:translate(693.60px,142.39px) scale(0.8325,0.8000);">Risk Category</span>
<span class="t" style="font-size:7.375px;color:#fff;font-weight:bold;font-family:'DejaVu Sans','Liberation Sans',sans-serif;transform:translate(750.70px,146.39px) scale(0.8294,0.8000);">Effective Priority</span>
<span class="t" style="font-size:7.375px;color:#fff;font-weight:bold;font-family:'DejaVu Sans','Liberation Sans',sans-serif;transform:translate(839.20px,146.39px) scale(0.7540,0.8000);">Owner</span>
<span class="t" style="font-size:7.375px;color:#fff;font-weight:bold;font-family:'DejaVu Sans','Liberation Sans',sans-serif;transform:translate(891.40px,146.39px) scale(0.8005,0.8000);">Target Date</span>
<span class="t" style="font-size:7.375px;color:#fff;font-weight:bold;font-family:'DejaVu Sans','Liberation Sans',sans-serif;transform:translate(937.10px,146.39px) scale(0.8142,0.8000);">Evidence Status</span>
<div style="left:747.00px;top:151.90px;width:277.00px;height:0.80px;background:#8c9dad;"></div>
<div style="left:994.50px;top:151.80px;width:29.50px;height:1.00px;background:#e4e4e4;"></div>
<div style="left:747.00px;top:135.70px;width:277.00px;height:1.00px;background:#e4e4e4;"></div>
<div style="left:747.00px;top:135.60px;width:247.50px;height:0.90px;background:#cfd4da;"></div>
<div style="left:9.40px;top:152.30px;width:985.10px;height:14.80px;background:#2c5f8a;"></div>
<div style="left:9.40px;top:151.85px;width:678.60px;height:0.90px;background:#9fb0c0;"></div>
<span class="t" style="font-size:8.125px;color:#fff;font-weight:bold;transform:translate(14.90px,157.14px) scale(0.7494,0.8000);">GATE 1: RISK CLASSIFICATION &amp; IMPACT ASSESSMENT</span>
<div style="left:9.40px;top:360.72px;width:985.10px;height:14.55px;background:#2c5f8a;"></div>
<div style="left:9.40px;top:360.27px;width:678.60px;height:0.90px;background:#9fb0c0;"></div>
<span class="t" style="font-size:8.125px;color:#fff;font-weight:bold;transform:translate(14.90px,365.56px) scale(0.7472,0.8000);">GATE 2: SECURITY VALIDATION &amp; ADVERSARIAL TESTING</span>
<div style="left:9.40px;top:697.97px;width:985.10px;height:14.30px;background:#2c5f8a;"></div>
<div style="left:9.40px;top:697.52px;width:678.60px;height:0.90px;background:#9fb0c0;"></div>
<span class="t" style="font-size:8.125px;color:#fff;font-weight:bold;transform:translate(14.90px,702.81px) scale(0.7523,0.8000);">GATE 3: HUMAN OVERSIGHT &amp; CONTROL</span>
<div style="left:747.00px;top:151.85px;width:247.50px;height:0.90px;background:#8c9dad;"></div>
<div style="left:9.40px;top:167.10px;width:985.10px;height:32.27px;background:#f2f2f2;"></div>
<div style="left:811.20px;top:167.10px;width:183.30px;height:32.27px;background:#f2f2f2;"></div>
<div style="left:210.50px;top:167.10px;width:56.00px;height:32.27px;background:#ffd7d7;"></div>
<div style="left:747.00px;top:167.10px;width:64.20px;height:32.27px;background:#ffd7d7;"></div>
<svg style="left:9.60px;top:167.50px;width:3.00px;height:3.00px" viewBox="0 0 3 3"><path d="M0 0H2.8L0 2.8Z" fill="#1e8a3c"/></svg>
<span class="t" style="font-size:6.875px;color:#222;font-weight:bold;transform:translate(15.54px,182.03px) scale(0.7040,0.8000);">1.1</span>
<span class="t" style="font-size:6.875px;color:#3c3c3c;transform:translate(29.90px,170.51px) scale(0.7456,0.8000);">The AI system has been classified under EU AI Act risk tiers (Prohibited, High-</span>
<span class="t" style="font-size:6.875px;color:#3c3c3c;transform:translate(29.90px,177.16px) scale(0.7456,0.8000);">Risk, Limited, Minimal) with documented rationale per Article 6 and Annex III</span>
<span class="t" style="font-size:6.875px;color:#3c3c3c;transform:translate(29.90px,183.81px) scale(0.7456,0.8000);">criteria</span>
<span class="t" style="font-size:7.125px;color:#c00000;font-weight:bold;transform:translate(226.01px,181.35px) scale(0.7344,0.8000);">CRITICAL</span>
<span class="t" style="font-size:5.9375px;color:#1f4e79;font-style:italic;transform:translate(339.80px,170.82px) scale(0.8128,0.8000);">EU AI Act Art. 6, Art. 7; Annex III</span>
<span class="t" style="font-size:6.5px;color:#555;transform:translate(552.15px,181.99px) scale(0.7920,0.8000);">Recommended</span>
<span class="t" style="font-size:6.5px;color:#000;font-family:'DejaVu Sans','Liberation Sans',sans-serif;transform:translate(703.37px,169.16px) scale(0.7360,0.8000);">Compliance</span>
<span class="t" style="font-size:6.25px;color:#c00000;font-weight:bold;font-family:'DejaVu Sans','Liberation Sans',sans-serif;transform:translate(764.60px,195.00px) scale(0.9328,0.8000);">CRITICAL</span>
<div style="left:9.40px;top:199.37px;width:985.10px;height:32.27px;background:#ffffff;"></div>
<div style="left:811.20px;top:199.37px;width:183.30px;height:32.27px;background:#ffffff;"></div>
<div style="left:210.50px;top:199.37px;width:56.00px;height:32.27px;background:#ffd7d7;"></div>
<div style="left:747.00px;top:199.37px;width:64.20px;height:32.27px;background:#ffd7d7;"></div>
<svg style="left:9.60px;top:199.77px;width:3.00px;height:3.00px" viewBox="0 0 3 3"><path d="M0 0H2.8L0 2.8Z" fill="#1e8a3c"/></svg>
<span class="t" style="font-size:6.875px;color:#222;font-weight:bold;transform:translate(15.54px,214.30px) scale(0.7040,0.8000);">1.2</span>
<span class="t" style="font-size:6.875px;color:#3c3c3c;transform:translate(29.90px,202.78px) scale(0.7456,0.8000);">An AI System Impact Assessment (AIIA) has been completed following ISO/IEC</span>
<span class="t" style="font-size:6.875px;color:#3c3c3c;transform:translate(29.90px,209.43px) scale(0.7456,0.8000);">42005:2025 process, including harms/benefits taxonomy for all identified</span>
<span class="t" style="font-size:6.875px;color:#3c3c3c;transform:translate(29.90px,216.08px) scale(0.7456,0.8000);">interested parties</span>
<span class="t" style="font-size:7.125px;color:#c00000;font-weight:bold;transform:translate(226.01px,213.62px) scale(0.7344,0.8000);">CRITICAL</span>
<span class="t" style="font-size:5.9375px;color:#1f4e79;font-style:italic;transform:translate(339.80px,203.09px) scale(0.8128,0.8000);">ISO/IEC 42005:2025 Sec. 5.8, Annex C; ISO</span>
<span class="t" style="font-size:5.9375px;color:#1f4e79;font-style:italic;transform:translate(339.80px,209.71px) scale(0.8128,0.8000);">42001 A.5.5</span>
<span class="t" style="font-size:6.5px;color:#555;transform:translate(559.15px,214.26px) scale(0.7920,0.8000);">Required</span>
<span class="t" style="font-size:6.5px;color:#000;font-family:'DejaVu Sans','Liberation Sans',sans-serif;transform:translate(700.46px,201.43px) scale(0.7360,0.8000);">Accountability</span>
<span class="t" style="font-size:6.25px;color:#c00000;font-weight:bold;font-family:'DejaVu Sans','Liberation Sans',sans-serif;transform:translate(764.60px,227.27px) scale(0.9328,0.8000);">CRITICAL</span>
<div style="left:9.40px;top:231.64px;width:985.10px;height:32.27px;background:#f2f2f2;"></div>
<div style="left:811.20px;top:231.64px;width:183.30px;height:32.27px;background:#f2f2f2;"></div>
<div style="left:210.50px;top:231.64px;width:56.00px;height:32.27px;background:#ffd7d7;"></div>
<div style="left:747.00px;top:231.64px;width:64.20px;height:32.27px;background:#ffd7d7;"></div>
<svg style="left:9.60px;top:232.04px;width:3.00px;height:3.00px" viewBox="0 0 3 3"><path d="M0 0H2.8L0 2.8Z" fill="#1e8a3c"/></svg>
<span class="t" style="font-size:6.875px;color:#222;font-weight:bold;transform:translate(15.54px,246.57px) scale(0.7040,0.8000);">1.3</span>
<span class="t" style="font-size:6.875px;color:#3c3c3c;transform:translate(29.90px,235.05px) scale(0.7456,0.8000);">Fundamental Rights Impact Assessment (FRIA) completed for high-risk</span>
<span class="t" style="font-size:6.875px;color:#3c3c3c;transform:translate(29.90px,241.70px) scale(0.7456,0.8000);">systems deployed by public bodies or affecting credit/insurance/essential</span>
<span class="t" style="font-size:6.875px;color:#3c3c3c;transform:translate(29.90px,248.35px) scale(0.7456,0.8000);">services</span>
<span class="t" style="font-size:7.125px;color:#c00000;font-weight:bold;transform:translate(226.01px,245.89px) scale(0.7344,0.8000);">CRITICAL</span>
<span class="t" style="font-size:5.9375px;color:#1f4e79;font-style:italic;transform:translate(339.80px,235.36px) scale(0.8128,0.8000);">EU AI Act Art. 27; GDPR Art. 35 DPIA</span>
<span class="t" style="font-size:6.5px;color:#555;transform:translate(552.15px,246.53px) scale(0.7920,0.8000);">Recommended</span>
<span class="t" style="font-size:6.5px;color:#000;font-family:'DejaVu Sans','Liberation Sans',sans-serif;transform:translate(703.37px,233.70px) scale(0.7360,0.8000);">Compliance</span>
<span class="t" style="font-size:6.25px;color:#c00000;font-weight:bold;font-family:'DejaVu Sans','Liberation Sans',sans-serif;transform:translate(764.60px,259.54px) scale(0.9328,0.8000);">CRITICAL</span>
<div style="left:9.40px;top:263.91px;width:985.10px;height:32.27px;background:#ffffff;"></div>
<div style="left:811.20px;top:263.91px;width:183.30px;height:32.27px;background:#ffffff;"></div>
<div style="left:210.50px;top:263.91px;width:56.00px;height:32.27px;background:#ffe4cc;"></div>
<div style="left:747.00px;top:263.91px;width:64.20px;height:32.27px;background:#ffe4cc;"></div>
<svg style="left:9.60px;top:264.31px;width:3.00px;height:3.00px" viewBox="0 0 3 3"><path d="M0 0H2.8L0 2.8Z" fill="#1e8a3c"/></svg>
<span class="t" style="font-size:6.875px;color:#222;font-weight:bold;transform:translate(15.54px,278.84px) scale(0.7040,0.8000);">1.4</span>
<span class="t" style="font-size:6.875px;color:#3c3c3c;transform:translate(29.90px,267.32px) scale(0.7456,0.8000);">AI system impact thresholds have been established for sensitive uses,</span>
<span class="t" style="font-size:6.875px;color:#3c3c3c;transform:translate(29.90px,273.97px) scale(0.7456,0.8000);">restricted uses, and impact scales, with documented acceptance criteria</span>
<span class="t" style="font-size:7.125px;color:#e07b10;font-weight:bold;transform:translate(231.67px,278.16px) scale(0.7344,0.8000);">HIGH</span>
<span class="t" style="font-size:5.9375px;color:#1f4e79;font-style:italic;transform:translate(339.80px,267.63px) scale(0.8128,0.8000);">ISO/IEC 42005:2025 Sec. 5.7; NIST AI RMF</span>
<span class="t" style="font-size:5.9375px;color:#1f4e79;font-style:italic;transform:translate(339.80px,274.25px) scale(0.8128,0.8000);">MAP 1.1</span>
<span class="t" style="font-size:6.5px;color:#555;transform:translate(559.15px,278.80px) scale(0.7920,0.8000);">Required</span>
<span class="t" style="font-size:6.5px;color:#000;font-family:'DejaVu Sans','Liberation Sans',sans-serif;transform:translate(709.80px,265.97px) scale(0.7360,0.8000);">Safety</span>
<span class="t" style="font-size:6.25px;color:#e07b10;font-weight:bold;font-family:'DejaVu Sans','Liberation Sans',sans-serif;transform:translate(771.04px,291.81px) scale(0.9328,0.8000);">HIGH</span>
<div style="left:9.40px;top:296.18px;width:985.10px;height:32.27px;background:#f2f2f2;"></div>
<div style="left:811.20px;top:296.18px;width:183.30px;height:32.27px;background:#f2f2f2;"></div>
<div style="left:210.50px;top:296.18px;width:56.00px;height:32.27px;background:#ffe4cc;"></div>
<div style="left:747.00px;top:296.18px;width:64.20px;height:32.27px;background:#ffe4cc;"></div>
<svg style="left:9.60px;top:296.58px;width:3.00px;height:3.00px" viewBox="0 0 3 3"><path d="M0 0H2.8L0 2.8Z" fill="#1e8a3c"/></svg>
<span class="t" style="font-size:6.875px;color:#222;font-weight:bold;transform:translate(15.54px,311.11px) scale(0.7040,0.8000);">1.5</span>
<span class="t" style="font-size:6.875px;color:#3c3c3c;transform:translate(29.90px,299.59px) scale(0.7456,0.8000);">Stakeholders and affected parties have been identified and documented,</span>
<span class="t" style="font-size:6.875px;color:#3c3c3c;transform:translate(29.90px,306.24px) scale(0.7456,0.8000);">including vulnerable populations and groups disproportionately impacted</span>
<span class="t" style="font-size:7.125px;color:#e07b10;font-weight:bold;transform:translate(231.67px,310.43px) scale(0.7344,0.8000);">HIGH</span>
<span class="t" style="font-size:5.9375px;color:#1f4e79;font-style:italic;transform:translate(339.80px,299.90px) scale(0.8128,0.8000);">ISO/IEC 42005:2025 Sec. 5.7; NIST AI RMF</span>
<span class="t" style="font-size:5.9375px;color:#1f4e79;font-style:italic;transform:translate(339.80px,306.52px) scale(0.8128,0.8000);">MAP 1.6</span>
<span class="t" style="font-size:6.5px;color:#555;transform:translate(559.15px,311.07px) scale(0.7920,0.8000);">Required</span>
<span class="t" style="font-size:6.5px;color:#000;font-family:'DejaVu Sans','Liberation Sans',sans-serif;transform:translate(701.91px,298.24px) scale(0.7360,0.8000);">Fairness/Bias</span>
<span class="t" style="font-size:6.25px;color:#e07b10;font-weight:bold;font-family:'DejaVu Sans','Liberation Sans',sans-serif;transform:translate(771.04px,324.08px) scale(0.9328,0.8000);">HIGH</span>
<div style="left:9.40px;top:328.45px;width:985.10px;height:32.27px;background:#ffffff;"></div>
<div style="left:811.20px;top:328.45px;width:183.30px;height:32.27px;background:#ffffff;"></div>
<div style="left:210.50px;top:328.45px;width:56.00px;height:32.27px;background:#ffd7d7;"></div>
<div style="left:747.00px;top:328.45px;width:64.20px;height:32.27px;background:#ffd7d7;"></div>
<svg style="left:9.60px;top:328.85px;width:3.00px;height:3.00px" viewBox="0 0 3 3"><path d="M0 0H2.8L0 2.8Z" fill="#1e8a3c"/></svg>
<span class="t" style="font-size:6.875px;color:#222;font-weight:bold;transform:translate(15.54px,343.38px) scale(0.7040,0.8000);">1.6</span>
<span class="t" style="font-size:6.875px;color:#3c3c3c;transform:translate(29.90px,331.86px) scale(0.7456,0.8000);">Risk management system operates as a continuous iterative process</span>
<span class="t" style="font-size:6.875px;color:#3c3c3c;transform:translate(29.90px,338.51px) scale(0.7456,0.8000);">throughout the AI system lifecycle, not a one-time assessment</span>
<span class="t" style="font-size:7.125px;color:#c00000;font-weight:bold;transform:translate(226.01px,342.70px) scale(0.7344,0.8000);">CRITICAL</span>
<span class="t" style="font-size:5.9375px;color:#1f4e79;font-style:italic;transform:translate(339.80px,332.17px) scale(0.8128,0.8000);">EU AI Act Art. 9(2); NIST AI RMF GOVERN;</span>
<span class="t" style="font-size:5.9375px;color:#1f4e79;font-style:italic;transform:translate(339.80px,338.79px) scale(0.8128,0.8000);">ISO 42001 Clause 6.1</span>
<span class="t" style="font-size:6.5px;color:#555;transform:translate(559.15px,343.34px) scale(0.7920,0.8000);">Required</span>
<span class="t" style="font-size:6.5px;color:#000;font-family:'DejaVu Sans','Liberation Sans',sans-serif;transform:translate(700.46px,330.51px) scale(0.7360,0.8000);">Accountability</span>
<span class="t" style="font-size:6.25px;color:#c00000;font-weight:bold;font-family:'DejaVu Sans','Liberation Sans',sans-serif;transform:translate(764.60px,356.35px) scale(0.9328,0.8000);">CRITICAL</span>
<div style="left:9.40px;top:375.27px;width:985.10px;height:32.27px;background:#ffffff;"></div>
<div style="left:811.20px;top:375.27px;width:183.30px;height:32.27px;background:#f2f2f2;"></div>
<div style="left:210.50px;top:375.27px;width:56.00px;height:32.27px;background:#ffd7d7;"></div>
<div style="left:747.00px;top:375.27px;width:64.20px;height:32.27px;background:#ffd7d7;"></div>
<svg style="left:9.60px;top:375.67px;width:3.00px;height:3.00px" viewBox="0 0 3 3"><path d="M0 0H2.8L0 2.8Z" fill="#1e8a3c"/></svg>
<span class="t" style="font-size:6.875px;color:#222;font-weight:bold;transform:translate(15.54px,390.20px) scale(0.7040,0.8000);">2.1</span>
<span class="t" style="font-size:6.875px;color:#3c3c3c;transform:translate(29.90px,378.68px) scale(0.7456,0.8000);">Prompt injection testing (direct and indirect) has been conducted and</span>
<span class="t" style="font-size:6.875px;color:#3c3c3c;transform:translate(29.90px,385.33px) scale(0.7456,0.8000);">documented, including typoglycemia variants, encoding obfuscation, and multi-</span>
<span class="t" style="font-size:6.875px;color:#3c3c3c;transform:translate(29.90px,391.98px) scale(0.7456,0.8000);">modal injection vectors</span>
<span class="t" style="font-size:7.125px;color:#c00000;font-weight:bold;transform:translate(226.01px,389.52px) scale(0.7344,0.8000);">CRITICAL</span>
<span class="t" style="font-size:5.9375px;color:#1f4e79;font-style:italic;transform:translate(339.80px,378.99px) scale(0.8128,0.8000);">OWASP LLM01:2025; MITRE ATLAS</span>
<span class="t" style="font-size:5.9375px;color:#1f4e79;font-style:italic;transform:translate(339.80px,385.61px) scale(0.8128,0.8000);">AML.T0051</span>
<span class="t" style="font-size:6.5px;color:#555;transform:translate(559.15px,390.16px) scale(0.7920,0.8000);">Required</span>
<span class="t" style="font-size:6.5px;color:#000;font-family:'DejaVu Sans','Liberation Sans',sans-serif;transform:translate(707.62px,377.33px) scale(0.7360,0.8000);">Security</span>
<span class="t" style="font-size:6.25px;color:#c00000;font-weight:bold;font-family:'DejaVu Sans','Liberation Sans',sans-serif;transform:translate(764.60px,403.17px) scale(0.9328,0.8000);">CRITICAL</span>
<div style="left:9.40px;top:407.54px;width:985.10px;height:32.27px;background:#f2f2f2;"></div>
<div style="left:811.20px;top:407.54px;width:183.30px;height:32.27px;background:#ffffff;"></div>
<div style="left:210.50px;top:407.54px;width:56.00px;height:32.27px;background:#ffd7d7;"></div>
<div style="left:747.00px;top:407.54px;width:64.20px;height:32.27px;background:#ffd7d7;"></div>
<svg style="left:9.60px;top:407.94px;width:3.00px;height:3.00px" viewBox="0 0 3 3"><path d="M0 0H2.8L0 2.8Z" fill="#1e8a3c"/></svg>
<span class="t" style="font-size:6.875px;color:#222;font-weight:bold;transform:translate(15.54px,422.47px) scale(0.7040,0.8000);">2.2</span>
<span class="t" style="font-size:6.875px;color:#3c3c3c;transform:translate(29.90px,410.95px) scale(0.7456,0.8000);">Sensitive information disclosure testing completed: automated PII probes verify</span>
<span class="t" style="font-size:6.875px;color:#3c3c3c;transform:translate(29.90px,417.60px) scale(0.7456,0.8000);">the system does not leak training data, ePHI, credentials, or internal system</span>
<span class="t" style="font-size:6.875px;color:#3c3c3c;transform:translate(29.90px,424.25px) scale(0.7456,0.8000);">information</span>
<span class="t" style="font-size:7.125px;color:#c00000;font-weight:bold;transform:translate(226.01px,421.79px) scale(0.7344,0.8000);">CRITICAL</span>
<span class="t" style="font-size:5.9375px;color:#1f4e79;font-style:italic;transform:translate(339.80px,411.26px) scale(0.8128,0.8000);">OWASP LLM02:2025; HIPAA §164.312;</span>
<span class="t" style="font-size:5.9375px;color:#1f4e79;font-style:italic;transform:translate(339.80px,417.88px) scale(0.8128,0.8000);">NIST AI 600-1 Data Privacy</span>
<span class="t" style="font-size:6.5px;color:#555;transform:translate(559.15px,422.43px) scale(0.7920,0.8000);">Required</span>
<span class="t" style="font-size:6.5px;color:#000;font-family:'DejaVu Sans','Liberation Sans',sans-serif;transform:translate(707.62px,409.60px) scale(0.7360,0.8000);">Security</span>
<span class="t" style="font-size:6.25px;color:#c00000;font-weight:bold;font-family:'DejaVu Sans','Liberation Sans',sans-serif;transform:translate(764.60px,435.44px) scale(0.9328,0.8000);">CRITICAL</span>
<div style="left:9.40px;top:439.81px;width:985.10px;height:32.27px;background:#ffffff;"></div>
<div style="left:811.20px;top:439.81px;width:183.30px;height:32.27px;background:#f2f2f2;"></div>
<div style="left:210.50px;top:439.81px;width:56.00px;height:32.27px;background:#ffd7d7;"></div>
<div style="left:747.00px;top:439.81px;width:64.20px;height:32.27px;background:#ffd7d7;"></div>
<svg style="left:9.60px;top:440.21px;width:3.00px;height:3.00px" viewBox="0 0 3 3"><path d="M0 0H2.8L0 2.8Z" fill="#1e8a3c"/></svg>
<span class="t" style="font-size:6.875px;color:#222;font-weight:bold;transform:translate(15.54px,454.74px) scale(0.7040,0.8000);">2.3</span>
<span class="t" style="font-size:6.875px;color:#3c3c3c;transform:translate(29.90px,443.22px) scale(0.7456,0.8000);">All AI system outputs are treated as untrusted input by downstream systems,</span>
<span class="t" style="font-size:6.875px;color:#3c3c3c;transform:translate(29.90px,449.87px) scale(0.7456,0.8000);">with output encoding, sanitization, and filtering applied before rendering</span>
<span class="t" style="font-size:7.125px;color:#c00000;font-weight:bold;transform:translate(226.01px,454.06px) scale(0.7344,0.8000);">CRITICAL</span>
<span class="t" style="font-size:5.9375px;color:#1f4e79;font-style:italic;transform:translate(339.80px,443.53px) scale(0.8128,0.8000);">OWASP LLM05:2025 (Insecure Output); AI</span>
<span class="t" style="font-size:5.9375px;color:#1f4e79;font-style:italic;transform:translate(339.80px,450.15px) scale(0.8128,0.8000);">Gov Architecture Ops Sec. 4.2</span>
<span class="t" style="font-size:6.5px;color:#555;transform:translate(559.15px,454.70px) scale(0.7920,0.8000);">Required</span>
<span class="t" style="font-size:6.5px;color:#000;font-family:'DejaVu Sans','Liberation Sans',sans-serif;transform:translate(707.62px,441.87px) scale(0.7360,0.8000);">Security</span>
<span class="t" style="font-size:6.25px;color:#c00000;font-weight:bold;font-family:'DejaVu Sans','Liberation Sans',sans-serif;transform:translate(764.60px,467.71px) scale(0.9328,0.8000);">CRITICAL</span>
<div style="left:9.40px;top:472.08px;width:985.10px;height:32.27px;background:#f2f2f2;"></div>
<div style="left:811.20px;top:472.08px;width:183.30px;height:32.27px;background:#ffffff;"></div>
<div style="left:210.50px;top:472.08px;width:56.00px;height:32.27px;background:#ffe4cc;"></div>
<div style="left:747.00px;top:472.08px;width:64.20px;height:32.27px;background:#ffe4cc;"></div>
<svg style="left:9.60px;top:472.48px;width:3.00px;height:3.00px" viewBox="0 0 3 3"><path d="M0 0H2.8L0 2.8Z" fill="#1e8a3c"/></svg>
<span class="t" style="font-size:6.875px;color:#222;font-weight:bold;transform:translate(15.54px,487.01px) scale(0.7040,0.8000);">2.4</span>
<span class="t" style="font-size:6.875px;color:#3c3c3c;transform:translate(29.90px,475.49px) scale(0.7456,0.8000);">System prompt leakage prevention tested: adversarial attempts to extract</span>
<span class="t" style="font-size:6.875px;color:#3c3c3c;transform:translate(29.90px,482.14px) scale(0.7456,0.8000);">system instructions, configuration details, or internal prompts are blocked</span>
<span class="t" style="font-size:7.125px;color:#e07b10;font-weight:bold;transform:translate(231.67px,486.33px) scale(0.7344,0.8000);">HIGH</span>
<span class="t" style="font-size:5.9375px;color:#1f4e79;font-style:italic;transform:translate(339.80px,475.80px) scale(0.8128,0.8000);">OWASP LLM07:2025; CSA Agentic AI Red</span>
<span class="t" style="font-size:5.9375px;color:#1f4e79;font-style:italic;transform:translate(339.80px,482.42px) scale(0.8128,0.8000);">Teaming Guide</span>
<span class="t" style="font-size:6.5px;color:#555;transform:translate(559.15px,486.97px) scale(0.7920,0.8000);">Required</span>
<span class="t" style="font-size:6.5px;color:#000;font-family:'DejaVu Sans','Liberation Sans',sans-serif;transform:translate(707.62px,474.14px) scale(0.7360,0.8000);">Security</span>
<span class="t" style="font-size:6.25px;color:#e07b10;font-weight:bold;font-family:'DejaVu Sans','Liberation Sans',sans-serif;transform:translate(771.04px,499.98px) scale(0.9328,0.8000);">HIGH</span>
<div style="left:9.40px;top:504.35px;width:985.10px;height:32.27px;background:#ffffff;"></div>
<div style="left:811.20px;top:504.35px;width:183.30px;height:32.27px;background:#f2f2f2;"></div>
<div style="left:210.50px;top:504.35px;width:56.00px;height:32.27px;background:#ffd7d7;"></div>
<div style="left:747.00px;top:504.35px;width:64.20px;height:32.27px;background:#ffd7d7;"></div>
<svg style="left:9.60px;top:504.75px;width:3.00px;height:3.00px" viewBox="0 0 3 3"><path d="M0 0H2.8L0 2.8Z" fill="#1e8a3c"/></svg>
<span class="t" style="font-size:6.875px;color:#222;font-weight:bold;transform:translate(15.54px,519.28px) scale(0.7040,0.8000);">2.5</span>
<span class="t" style="font-size:6.875px;color:#3c3c3c;transform:translate(29.90px,507.76px) scale(0.7456,0.8000);">Supply chain integrity verified: all model files, libraries, and dependencies</span>
<span class="t" style="font-size:6.875px;color:#3c3c3c;transform:translate(29.90px,514.41px) scale(0.7456,0.8000);">scanned for vulnerabilities; Model Bill of Materials (MBOM) or AI-SBOM</span>
<span class="t" style="font-size:6.875px;color:#3c3c3c;transform:translate(29.90px,521.06px) scale(0.7456,0.8000);">documented</span>
<span class="t" style="font-size:7.125px;color:#c00000;font-weight:bold;transform:translate(226.01px,518.60px) scale(0.7344,0.8000);">CRITICAL</span>
<span class="t" style="font-size:5.9375px;color:#1f4e79;font-style:italic;transform:translate(339.80px,508.07px) scale(0.8128,0.8000);">OWASP LLM03:2025 (Supply Chain); NIST</span>
<span class="t" style="font-size:5.9375px;color:#1f4e79;font-style:italic;transform:translate(339.80px,514.69px) scale(0.8128,0.8000);">AI 600-1 Value Chain; OpenSSF MLSecOps</span>
<span class="t" style="font-size:6.5px;color:#555;transform:translate(559.15px,519.24px) scale(0.7920,0.8000);">Required</span>
<span class="t" style="font-size:6.5px;color:#000;font-family:'DejaVu Sans','Liberation Sans',sans-serif;transform:translate(707.62px,506.41px) scale(0.7360,0.8000);">Security</span>
<span class="t" style="font-size:6.25px;color:#c00000;font-weight:bold;font-family:'DejaVu Sans','Liberation Sans',sans-serif;transform:translate(764.60px,532.25px) scale(0.9328,0.8000);">CRITICAL</span>
<div style="left:9.40px;top:536.62px;width:985.10px;height:32.27px;background:#f2f2f2;"></div>
<div style="left:811.20px;top:536.62px;width:183.30px;height:32.27px;background:#ffffff;"></div>
<div style="left:210.50px;top:536.62px;width:56.00px;height:32.27px;background:#ffe4cc;"></div>
<div style="left:747.00px;top:536.62px;width:64.20px;height:32.27px;background:#ffe4cc;"></div>
<svg style="left:9.60px;top:537.02px;width:3.00px;height:3.00px" viewBox="0 0 3 3"><path d="M0 0H2.8L0 2.8Z" fill="#1e8a3c"/></svg>
<span class="t" style="font-size:6.875px;color:#222;font-weight:bold;transform:translate(15.54px,551.55px) scale(0.7040,0.8000);">2.6</span>
<span class="t" style="font-size:6.875px;color:#3c3c3c;transform:translate(29.90px,540.03px) scale(0.7456,0.8000);">RAG/vector database security validated: vector store access controls enforced,</span>
<span class="t" style="font-size:6.875px;color:#3c3c3c;transform:translate(29.90px,546.68px) scale(0.7456,0.8000);">embedding integrity verified, retrieval poisoning prevention tested</span>
<span class="t" style="font-size:7.125px;color:#e07b10;font-weight:bold;transform:translate(231.67px,550.87px) scale(0.7344,0.8000);">HIGH</span>
<span class="t" style="font-size:5.9375px;color:#1f4e79;font-style:italic;transform:translate(339.80px,540.34px) scale(0.8128,0.8000);">OWASP LLM08:2025; CSA Knowledge</span>
<span class="t" style="font-size:5.9375px;color:#1f4e79;font-style:italic;transform:translate(339.80px,546.96px) scale(0.8128,0.8000);">Base Poisoning</span>
<span class="t" style="font-size:6.5px;color:#555;transform:translate(565.31px,551.51px) scale(0.7920,0.8000);">N/A</span>
<span class="t" style="font-size:6.5px;color:#000;font-family:'DejaVu Sans','Liberation Sans',sans-serif;transform:translate(707.62px,538.68px) scale(0.7360,0.8000);">Security</span>
<span class="t" style="font-size:6.25px;color:#e07b10;font-weight:bold;font-family:'DejaVu Sans','Liberation Sans',sans-serif;transform:translate(771.04px,564.52px) scale(0.9328,0.8000);">HIGH</span>
<div style="left:9.40px;top:568.89px;width:985.10px;height:32.27px;background:#ffffff;"></div>
<div style="left:811.20px;top:568.89px;width:183.30px;height:32.27px;background:#f2f2f2;"></div>
<div style="left:210.50px;top:568.89px;width:56.00px;height:32.27px;background:#ffd7d7;"></div>
<div style="left:747.00px;top:568.89px;width:64.20px;height:32.27px;background:#ffd7d7;"></div>
<svg style="left:9.60px;top:569.29px;width:3.00px;height:3.00px" viewBox="0 0 3 3"><path d="M0 0H2.8L0 2.8Z" fill="#1e8a3c"/></svg>
<span class="t" style="font-size:6.875px;color:#222;font-weight:bold;transform:translate(15.54px,583.82px) scale(0.7040,0.8000);">2.7</span>
<span class="t" style="font-size:6.875px;color:#3c3c3c;transform:translate(29.90px,572.30px) scale(0.7456,0.8000);">Input validation (Prompt Firewall) active: pattern matching for dangerous</span>
<span class="t" style="font-size:6.875px;color:#3c3c3c;transform:translate(29.90px,578.95px) scale(0.7456,0.8000);">instructions, length limits, perplexity filtering, and vector sanitization</span>
<span class="t" style="font-size:6.875px;color:#3c3c3c;transform:translate(29.90px,585.60px) scale(0.7456,0.8000);">implemented</span>
<span class="t" style="font-size:7.125px;color:#c00000;font-weight:bold;transform:translate(226.01px,583.14px) scale(0.7344,0.8000);">CRITICAL</span>
<span class="t" style="font-size:5.9375px;color:#1f4e79;font-style:italic;transform:translate(339.80px,572.61px) scale(0.8128,0.8000);">OWASP LLM01:2025; AI Gov Architecture</span>
<span class="t" style="font-size:5.9375px;color:#1f4e79;font-style:italic;transform:translate(339.80px,579.23px) scale(0.8128,0.8000);">Ops Sec. 3.4; NIST AI 600-1 Information</span>
<span class="t" style="font-size:5.9375px;color:#1f4e79;font-style:italic;transform:translate(339.80px,585.85px) scale(0.8128,0.8000);">Security</span>
<span class="t" style="font-size:6.5px;color:#555;transform:translate(559.15px,583.78px) scale(0.7920,0.8000);">Required</span>
<span class="t" style="font-size:6.5px;color:#000;font-family:'DejaVu Sans','Liberation Sans',sans-serif;transform:translate(707.62px,570.95px) scale(0.7360,0.8000);">Security</span>
<span class="t" style="font-size:6.25px;color:#c00000;font-weight:bold;font-family:'DejaVu Sans','Liberation Sans',sans-serif;transform:translate(764.60px,596.79px) scale(0.9328,0.8000);">CRITICAL</span>
<div style="left:9.40px;top:601.16px;width:985.10px;height:32.27px;background:#f2f2f2;"></div>
<div style="left:811.20px;top:601.16px;width:183.30px;height:32.27px;background:#ffffff;"></div>
<div style="left:210.50px;top:601.16px;width:56.00px;height:32.27px;background:#ffd7d7;"></div>
<div style="left:747.00px;top:601.16px;width:64.20px;height:32.27px;background:#ffd7d7;"></div>
<svg style="left:9.60px;top:601.56px;width:3.00px;height:3.00px" viewBox="0 0 3 3"><path d="M0 0H2.8L0 2.8Z" fill="#1e8a3c"/></svg>
<span class="t" style="font-size:6.875px;color:#222;font-weight:bold;transform:translate(15.54px,616.09px) scale(0.7040,0.8000);">2.8</span>
<span class="t" style="font-size:6.875px;color:#3c3c3c;transform:translate(29.90px,604.57px) scale(0.7456,0.8000);">Adversarial red team testing conducted by independent team (not the</span>
<span class="t" style="font-size:6.875px;color:#3c3c3c;transform:translate(29.90px,611.22px) scale(0.7456,0.8000);">development team), including jailbreak attempts, safety filter bypass, and data</span>
<span class="t" style="font-size:6.875px;color:#3c3c3c;transform:translate(29.90px,617.87px) scale(0.7456,0.8000);">extraction attacks</span>
<span class="t" style="font-size:7.125px;color:#c00000;font-weight:bold;transform:translate(226.01px,615.41px) scale(0.7344,0.8000);">CRITICAL</span>
<span class="t" style="font-size:5.9375px;color:#1f4e79;font-style:italic;transform:translate(339.80px,604.88px) scale(0.8128,0.8000);">EU AI Act Art. 15; NIST AI 600-1 MS-4.2-</span>
<span class="t" style="font-size:5.9375px;color:#1f4e79;font-style:italic;transform:translate(339.80px,611.50px) scale(0.8128,0.8000);">001; AI Gov Architecture Ops Sec. 5.3</span>
<span class="t" style="font-size:6.5px;color:#555;transform:translate(559.15px,616.05px) scale(0.7920,0.8000);">Required</span>
<span class="t" style="font-size:6.5px;color:#000;font-family:'DejaVu Sans','Liberation Sans',sans-serif;transform:translate(707.62px,603.22px) scale(0.7360,0.8000);">Security</span>
<span class="t" style="font-size:6.25px;color:#c00000;font-weight:bold;font-family:'DejaVu Sans','Liberation Sans',sans-serif;transform:translate(764.60px,629.06px) scale(0.9328,0.8000);">CRITICAL</span>
<div style="left:9.40px;top:633.43px;width:985.10px;height:32.27px;background:#ffffff;"></div>
<div style="left:811.20px;top:633.43px;width:183.30px;height:32.27px;background:#f2f2f2;"></div>
<div style="left:210.50px;top:633.43px;width:56.00px;height:32.27px;background:#ffe4cc;"></div>
<div style="left:747.00px;top:633.43px;width:64.20px;height:32.27px;background:#ffe4cc;"></div>
<svg style="left:9.60px;top:633.83px;width:3.00px;height:3.00px" viewBox="0 0 3 3"><path d="M0 0H2.8L0 2.8Z" fill="#1e8a3c"/></svg>
<span class="t" style="font-size:6.875px;color:#222;font-weight:bold;transform:translate(15.54px,648.36px) scale(0.7040,0.8000);">2.9</span>
<span class="t" style="font-size:6.875px;color:#3c3c3c;transform:translate(29.90px,636.84px) scale(0.7456,0.8000);">Secure serialization enforced: insecure formats (Python pickle) prohibited;</span>
<span class="t" style="font-size:6.875px;color:#3c3c3c;transform:translate(29.90px,643.49px) scale(0.7456,0.8000);">Safetensors, ONNX, or equivalent mandated for model storage</span>
<span class="t" style="font-size:7.125px;color:#e07b10;font-weight:bold;transform:translate(231.67px,647.68px) scale(0.7344,0.8000);">HIGH</span>
<span class="t" style="font-size:5.9375px;color:#1f4e79;font-style:italic;transform:translate(339.80px,637.15px) scale(0.8128,0.8000);">AI Gov Architecture Ops Sec. 3.4; OWASP</span>
<span class="t" style="font-size:5.9375px;color:#1f4e79;font-style:italic;transform:translate(339.80px,643.77px) scale(0.8128,0.8000);">ML06 Supply Chain</span>
<span class="t" style="font-size:6.5px;color:#555;transform:translate(559.15px,648.32px) scale(0.7920,0.8000);">Required</span>
<span class="t" style="font-size:6.5px;color:#000;font-family:'DejaVu Sans','Liberation Sans',sans-serif;transform:translate(707.62px,635.49px) scale(0.7360,0.8000);">Security</span>
<span class="t" style="font-size:6.25px;color:#e07b10;font-weight:bold;font-family:'DejaVu Sans','Liberation Sans',sans-serif;transform:translate(771.04px,661.33px) scale(0.9328,0.8000);">HIGH</span>
<div style="left:9.40px;top:665.70px;width:985.10px;height:32.27px;background:#f2f2f2;"></div>
<div style="left:811.20px;top:665.70px;width:183.30px;height:32.27px;background:#ffffff;"></div>
<div style="left:210.50px;top:665.70px;width:56.00px;height:32.27px;background:#ffe4cc;"></div>
<div style="left:747.00px;top:665.70px;width:64.20px;height:32.27px;background:#ffe4cc;"></div>
<svg style="left:9.60px;top:666.10px;width:3.00px;height:3.00px" viewBox="0 0 3 3"><path d="M0 0H2.8L0 2.8Z" fill="#1e8a3c"/></svg>
<span class="t" style="font-size:6.875px;color:#222;font-weight:bold;transform:translate(14.20px,680.63px) scale(0.7040,0.8000);">2.10</span>
<span class="t" style="font-size:6.875px;color:#3c3c3c;transform:translate(29.90px,669.11px) scale(0.7456,0.8000);">API and inference endpoint security validated: authentication, authorization, rate</span>
<span class="t" style="font-size:6.875px;color:#3c3c3c;transform:translate(29.90px,675.76px) scale(0.7456,0.8000);">limiting, computational resource quotas, and DDoS protections active</span>
<span class="t" style="font-size:7.125px;color:#e07b10;font-weight:bold;transform:translate(231.67px,679.95px) scale(0.7344,0.8000);">HIGH</span>
<span class="t" style="font-size:5.9375px;color:#1f4e79;font-style:italic;transform:translate(339.80px,669.42px) scale(0.8128,0.8000);">ISO 27001 A.8.24; NIST CSF PR.AC;</span>
<span class="t" style="font-size:5.9375px;color:#1f4e79;font-style:italic;transform:translate(339.80px,676.04px) scale(0.8128,0.8000);">OWASP API Security Top 10</span>
<span class="t" style="font-size:6.5px;color:#555;transform:translate(559.15px,680.59px) scale(0.7920,0.8000);">Required</span>
<span class="t" style="font-size:6.5px;color:#000;font-family:'DejaVu Sans','Liberation Sans',sans-serif;transform:translate(707.62px,667.76px) scale(0.7360,0.8000);">Security</span>
<span class="t" style="font-size:6.25px;color:#e07b10;font-weight:bold;font-family:'DejaVu Sans','Liberation Sans',sans-serif;transform:translate(771.04px,693.60px) scale(0.9328,0.8000);">HIGH</span>
<div style="left:9.40px;top:712.27px;width:985.10px;height:32.27px;background:#f2f2f2;"></div>
<div style="left:811.20px;top:712.27px;width:183.30px;height:32.27px;background:#f2f2f2;"></div>
<div style="left:210.50px;top:712.27px;width:56.00px;height:32.27px;background:#ffd7d7;"></div>
<div style="left:747.00px;top:712.27px;width:64.20px;height:32.27px;background:#ffd7d7;"></div>
<svg style="left:9.60px;top:712.67px;width:3.00px;height:3.00px" viewBox="0 0 3 3"><path d="M0 0H2.8L0 2.8Z" fill="#1e8a3c"/></svg>
<span class="t" style="font-size:6.875px;color:#222;font-weight:bold;transform:translate(15.54px,727.20px) scale(0.7040,0.8000);">3.1</span>
<span class="t" style="font-size:6.875px;color:#3c3c3c;transform:translate(29.90px,715.68px) scale(0.7456,0.8000);">Human oversight configuration documented and active: HITL (Human-in-the-</span>
<span class="t" style="font-size:6.875px;color:#3c3c3c;transform:translate(29.90px,722.33px) scale(0.7456,0.8000);">Loop), HOTL (Human-on-the-Loop), or HOOTL (Human-out-of-the-Loop)</span>
<span class="t" style="font-size:6.875px;color:#3c3c3c;transform:translate(29.90px,728.98px) scale(0.7456,0.8000);">classification assigned with rationale</span>
<span class="t" style="font-size:7.125px;color:#c00000;font-weight:bold;transform:translate(226.01px,726.52px) scale(0.7344,0.8000);">CRITICAL</span>
<span class="t" style="font-size:5.9375px;color:#1f4e79;font-style:italic;transform:translate(339.80px,715.99px) scale(0.8128,0.8000);">EU AI Act Art. 14(1-2); NIST AI 600-1 GV-3.2-</span>
<span class="t" style="font-size:5.9375px;color:#1f4e79;font-style:italic;transform:translate(339.80px,722.61px) scale(0.8128,0.8000);">003</span>
<span class="t" style="font-size:6.5px;color:#555;transform:translate(559.15px,727.16px) scale(0.7920,0.8000);">Required</span>
<span class="t" style="font-size:6.5px;color:#000;font-family:'DejaVu Sans','Liberation Sans',sans-serif;transform:translate(700.46px,714.33px) scale(0.7360,0.8000);">Accountability</span>
<span class="t" style="font-size:6.25px;color:#c00000;font-weight:bold;font-family:'DejaVu Sans','Liberation Sans',sans-serif;transform:translate(764.60px,740.17px) scale(0.9328,0.8000);">CRITICAL</span>
<div style="left:9.40px;top:744.54px;width:985.10px;height:27.86px;background:#ffffff;"></div>
<div style="left:811.20px;top:744.54px;width:183.30px;height:27.86px;background:#ffffff;"></div>
<div style="left:210.50px;top:744.54px;width:56.00px;height:27.86px;background:#ffd7d7;"></div>
<div style="left:747.00px;top:744.54px;width:64.20px;height:27.86px;background:#ffd7d7;"></div>
<svg style="left:9.60px;top:744.94px;width:3.00px;height:3.00px" viewBox="0 0 3 3"><path d="M0 0H2.8L0 2.8Z" fill="#1e8a3c"/></svg>
<span class="t" style="font-size:6.875px;color:#222;font-weight:bold;transform:translate(15.54px,759.47px) scale(0.7040,0.8000);">3.2</span>
<span class="t" style="font-size:6.875px;color:#3c3c3c;transform:translate(29.90px,747.95px) scale(0.7456,0.8000);">Kill-switch (emergency override) mechanism exists, is out-of-band from the AI</span>
<span class="t" style="font-size:6.875px;color:#3c3c3c;transform:translate(29.90px,754.60px) scale(0.7456,0.8000);">system, has been tested, and can be activated without AI system cooperation</span>
<span class="t" style="font-size:7.125px;color:#c00000;font-weight:bold;transform:translate(226.01px,758.79px) scale(0.7344,0.8000);">CRITICAL</span>
<span class="t" style="font-size:5.9375px;color:#1f4e79;font-style:italic;transform:translate(339.80px,748.26px) scale(0.8128,0.8000);">EU AI Act Art. 14(4)(e); CSA Blast Radius</span>
<span class="t" style="font-size:5.9375px;color:#1f4e79;font-style:italic;transform:translate(339.80px,754.88px) scale(0.8128,0.8000);">Containment</span>
<span class="t" style="font-size:6.5px;color:#555;transform:translate(559.15px,759.43px) scale(0.7920,0.8000);">Required</span>
<span class="t" style="font-size:6.5px;color:#000;font-family:'DejaVu Sans','Liberation Sans',sans-serif;transform:translate(709.80px,746.60px) scale(0.7360,0.8000);">Safety</span>
<span class="t" style="font-size:6.25px;color:#c00000;font-weight:bold;font-family:'DejaVu Sans','Liberation Sans',sans-serif;transform:translate(764.60px,772.44px) scale(0.9328,0.8000);">CRITICAL</span>
<div style="left:28.10px;top:167.10px;width:1.00px;height:32.27px;background:#d6d6d6;"></div>
<div style="left:210.00px;top:167.10px;width:1.00px;height:32.27px;background:#d6d6d6;"></div>
<div style="left:266.00px;top:167.10px;width:1.00px;height:32.27px;background:#d6d6d6;"></div>
<div style="left:337.50px;top:167.10px;width:1.00px;height:32.27px;background:#d6d6d6;"></div>
<div style="left:436.00px;top:167.10px;width:1.00px;height:32.27px;background:#d6d6d6;"></div>
<div style="left:549.00px;top:167.10px;width:1.00px;height:32.27px;background:#d6d6d6;"></div>
<div style="left:589.00px;top:167.10px;width:1.00px;height:32.27px;background:#d6d6d6;"></div>
<div style="left:687.50px;top:167.10px;width:1.00px;height:32.27px;background:#d6d6d6;"></div>
<div style="left:9.40px;top:198.87px;width:678.60px;height:1.00px;background:#d6d6d6;"></div>
<div style="left:28.10px;top:199.37px;width:1.00px;height:32.27px;background:#d6d6d6;"></div>
<div style="left:210.00px;top:199.37px;width:1.00px;height:32.27px;background:#d6d6d6;"></div>
<div style="left:266.00px;top:199.37px;width:1.00px;height:32.27px;background:#d6d6d6;"></div>
<div style="left:337.50px;top:199.37px;width:1.00px;height:32.27px;background:#d6d6d6;"></div>
<div style="left:436.00px;top:199.37px;width:1.00px;height:32.27px;background:#d6d6d6;"></div>
<div style="left:549.00px;top:199.37px;width:1.00px;height:32.27px;background:#d6d6d6;"></div>
<div style="left:589.00px;top:199.37px;width:1.00px;height:32.27px;background:#d6d6d6;"></div>
<div style="left:687.50px;top:199.37px;width:1.00px;height:32.27px;background:#d6d6d6;"></div>
<div style="left:9.40px;top:231.14px;width:678.60px;height:1.00px;background:#d6d6d6;"></div>
<div style="left:28.10px;top:231.64px;width:1.00px;height:32.27px;background:#d6d6d6;"></div>
<div style="left:210.00px;top:231.64px;width:1.00px;height:32.27px;background:#d6d6d6;"></div>
<div style="left:266.00px;top:231.64px;width:1.00px;height:32.27px;background:#d6d6d6;"></div>
<div style="left:337.50px;top:231.64px;width:1.00px;height:32.27px;background:#d6d6d6;"></div>
<div style="left:436.00px;top:231.64px;width:1.00px;height:32.27px;background:#d6d6d6;"></div>
<div style="left:549.00px;top:231.64px;width:1.00px;height:32.27px;background:#d6d6d6;"></div>
<div style="left:589.00px;top:231.64px;width:1.00px;height:32.27px;background:#d6d6d6;"></div>
<div style="left:687.50px;top:231.64px;width:1.00px;height:32.27px;background:#d6d6d6;"></div>
<div style="left:9.40px;top:263.41px;width:678.60px;height:1.00px;background:#d6d6d6;"></div>
<div style="left:28.10px;top:263.91px;width:1.00px;height:32.27px;background:#d6d6d6;"></div>
<div style="left:210.00px;top:263.91px;width:1.00px;height:32.27px;background:#d6d6d6;"></div>
<div style="left:266.00px;top:263.91px;width:1.00px;height:32.27px;background:#d6d6d6;"></div>
<div style="left:337.50px;top:263.91px;width:1.00px;height:32.27px;background:#d6d6d6;"></div>
<div style="left:436.00px;top:263.91px;width:1.00px;height:32.27px;background:#d6d6d6;"></div>
<div style="left:549.00px;top:263.91px;width:1.00px;height:32.27px;background:#d6d6d6;"></div>
<div style="left:589.00px;top:263.91px;width:1.00px;height:32.27px;background:#d6d6d6;"></div>
<div style="left:687.50px;top:263.91px;width:1.00px;height:32.27px;background:#d6d6d6;"></div>
<div style="left:9.40px;top:295.68px;width:678.60px;height:1.00px;background:#d6d6d6;"></div>
<div style="left:28.10px;top:296.18px;width:1.00px;height:32.27px;background:#d6d6d6;"></div>
<div style="left:210.00px;top:296.18px;width:1.00px;height:32.27px;background:#d6d6d6;"></div>
<div style="left:266.00px;top:296.18px;width:1.00px;height:32.27px;background:#d6d6d6;"></div>
<div style="left:337.50px;top:296.18px;width:1.00px;height:32.27px;background:#d6d6d6;"></div>
<div style="left:436.00px;top:296.18px;width:1.00px;height:32.27px;background:#d6d6d6;"></div>
<div style="left:549.00px;top:296.18px;width:1.00px;height:32.27px;background:#d6d6d6;"></div>
<div style="left:589.00px;top:296.18px;width:1.00px;height:32.27px;background:#d6d6d6;"></div>
<div style="left:687.50px;top:296.18px;width:1.00px;height:32.27px;background:#d6d6d6;"></div>
<div style="left:9.40px;top:327.95px;width:678.60px;height:1.00px;background:#d6d6d6;"></div>
<div style="left:28.10px;top:328.45px;width:1.00px;height:32.27px;background:#d6d6d6;"></div>
<div style="left:210.00px;top:328.45px;width:1.00px;height:32.27px;background:#d6d6d6;"></div>
<div style="left:266.00px;top:328.45px;width:1.00px;height:32.27px;background:#d6d6d6;"></div>
<div style="left:337.50px;top:328.45px;width:1.00px;height:32.27px;background:#d6d6d6;"></div>
<div style="left:436.00px;top:328.45px;width:1.00px;height:32.27px;background:#d6d6d6;"></div>
<div style="left:549.00px;top:328.45px;width:1.00px;height:32.27px;background:#d6d6d6;"></div>
<div style="left:589.00px;top:328.45px;width:1.00px;height:32.27px;background:#d6d6d6;"></div>
<div style="left:687.50px;top:328.45px;width:1.00px;height:32.27px;background:#d6d6d6;"></div>
<div style="left:28.10px;top:375.27px;width:1.00px;height:32.27px;background:#d6d6d6;"></div>
<div style="left:210.00px;top:375.27px;width:1.00px;height:32.27px;background:#d6d6d6;"></div>
<div style="left:266.00px;top:375.27px;width:1.00px;height:32.27px;background:#d6d6d6;"></div>
<div style="left:337.50px;top:375.27px;width:1.00px;height:32.27px;background:#d6d6d6;"></div>
<div style="left:436.00px;top:375.27px;width:1.00px;height:32.27px;background:#d6d6d6;"></div>
<div style="left:549.00px;top:375.27px;width:1.00px;height:32.27px;background:#d6d6d6;"></div>
<div style="left:589.00px;top:375.27px;width:1.00px;height:32.27px;background:#d6d6d6;"></div>
<div style="left:687.50px;top:375.27px;width:1.00px;height:32.27px;background:#d6d6d6;"></div>
<div style="left:9.40px;top:407.04px;width:678.60px;height:1.00px;background:#d6d6d6;"></div>
<div style="left:28.10px;top:407.54px;width:1.00px;height:32.27px;background:#d6d6d6;"></div>
<div style="left:210.00px;top:407.54px;width:1.00px;height:32.27px;background:#d6d6d6;"></div>
<div style="left:266.00px;top:407.54px;width:1.00px;height:32.27px;background:#d6d6d6;"></div>
<div style="left:337.50px;top:407.54px;width:1.00px;height:32.27px;background:#d6d6d6;"></div>
<div style="left:436.00px;top:407.54px;width:1.00px;height:32.27px;background:#d6d6d6;"></div>
<div style="left:549.00px;top:407.54px;width:1.00px;height:32.27px;background:#d6d6d6;"></div>
<div style="left:589.00px;top:407.54px;width:1.00px;height:32.27px;background:#d6d6d6;"></div>
<div style="left:687.50px;top:407.54px;width:1.00px;height:32.27px;background:#d6d6d6;"></div>
<div style="left:9.40px;top:439.31px;width:678.60px;height:1.00px;background:#d6d6d6;"></div>
<div style="left:28.10px;top:439.81px;width:1.00px;height:32.27px;background:#d6d6d6;"></div>
<div style="left:210.00px;top:439.81px;width:1.00px;height:32.27px;background:#d6d6d6;"></div>
<div style="left:266.00px;top:439.81px;width:1.00px;height:32.27px;background:#d6d6d6;"></div>
<div style="left:337.50px;top:439.81px;width:1.00px;height:32.27px;background:#d6d6d6;"></div>
<div style="left:436.00px;top:439.81px;width:1.00px;height:32.27px;background:#d6d6d6;"></div>
<div style="left:549.00px;top:439.81px;width:1.00px;height:32.27px;background:#d6d6d6;"></div>
<div style="left:589.00px;top:439.81px;width:1.00px;height:32.27px;background:#d6d6d6;"></div>
<div style="left:687.50px;top:439.81px;width:1.00px;height:32.27px;background:#d6d6d6;"></div>
<div style="left:9.40px;top:471.58px;width:678.60px;height:1.00px;background:#d6d6d6;"></div>
<div style="left:28.10px;top:472.08px;width:1.00px;height:32.27px;background:#d6d6d6;"></div>
<div style="left:210.00px;top:472.08px;width:1.00px;height:32.27px;background:#d6d6d6;"></div>
<div style="left:266.00px;top:472.08px;width:1.00px;height:32.27px;background:#d6d6d6;"></div>
<div style="left:337.50px;top:472.08px;width:1.00px;height:32.27px;background:#d6d6d6;"></div>
<div style="left:436.00px;top:472.08px;width:1.00px;height:32.27px;background:#d6d6d6;"></div>
<div style="left:549.00px;top:472.08px;width:1.00px;height:32.27px;background:#d6d6d6;"></div>
<div style="left:589.00px;top:472.08px;width:1.00px;height:32.27px;background:#d6d6d6;"></div>
<div style="left:687.50px;top:472.08px;width:1.00px;height:32.27px;background:#d6d6d6;"></div>
<div style="left:9.40px;top:503.85px;width:678.60px;height:1.00px;background:#d6d6d6;"></div>
<div style="left:28.10px;top:504.35px;width:1.00px;height:32.27px;background:#d6d6d6;"></div>
<div style="left:210.00px;top:504.35px;width:1.00px;height:32.27px;background:#d6d6d6;"></div>
<div style="left:266.00px;top:504.35px;width:1.00px;height:32.27px;background:#d6d6d6;"></div>
<div style="left:337.50px;top:504.35px;width:1.00px;height:32.27px;background:#d6d6d6;"></div>
<div style="left:436.00px;top:504.35px;width:1.00px;height:32.27px;background:#d6d6d6;"></div>
<div style="left:549.00px;top:504.35px;width:1.00px;height:32.27px;background:#d6d6d6;"></div>
<div style="left:589.00px;top:504.35px;width:1.00px;height:32.27px;background:#d6d6d6;"></div>
<div style="left:687.50px;top:504.35px;width:1.00px;height:32.27px;background:#d6d6d6;"></div>
<div style="left:9.40px;top:536.12px;width:678.60px;height:1.00px;background:#d6d6d6;"></div>
<div style="left:28.10px;top:536.62px;width:1.00px;height:32.27px;background:#d6d6d6;"></div>
<div style="left:210.00px;top:536.62px;width:1.00px;height:32.27px;background:#d6d6d6;"></div>
<div style="left:266.00px;top:536.62px;width:1.00px;height:32.27px;background:#d6d6d6;"></div>
<div style="left:337.50px;top:536.62px;width:1.00px;height:32.27px;background:#d6d6d6;"></div>
<div style="left:436.00px;top:536.62px;width:1.00px;height:32.27px;background:#d6d6d6;"></div>
<div style="left:549.00px;top:536.62px;width:1.00px;height:32.27px;background:#d6d6d6;"></div>
<div style="left:589.00px;top:536.62px;width:1.00px;height:32.27px;background:#d6d6d6;"></div>
<div style="left:687.50px;top:536.62px;width:1.00px;height:32.27px;background:#d6d6d6;"></div>
<div style="left:9.40px;top:568.39px;width:678.60px;height:1.00px;background:#d6d6d6;"></div>
<div style="left:28.10px;top:568.89px;width:1.00px;height:32.27px;background:#d6d6d6;"></div>
<div style="left:210.00px;top:568.89px;width:1.00px;height:32.27px;background:#d6d6d6;"></div>
<div style="left:266.00px;top:568.89px;width:1.00px;height:32.27px;background:#d6d6d6;"></div>
<div style="left:337.50px;top:568.89px;width:1.00px;height:32.27px;background:#d6d6d6;"></div>
<div style="left:436.00px;top:568.89px;width:1.00px;height:32.27px;background:#d6d6d6;"></div>
<div style="left:549.00px;top:568.89px;width:1.00px;height:32.27px;background:#d6d6d6;"></div>
<div style="left:589.00px;top:568.89px;width:1.00px;height:32.27px;background:#d6d6d6;"></div>
<div style="left:687.50px;top:568.89px;width:1.00px;height:32.27px;background:#d6d6d6;"></div>
<div style="left:9.40px;top:600.66px;width:678.60px;height:1.00px;background:#d6d6d6;"></div>
<div style="left:28.10px;top:601.16px;width:1.00px;height:32.27px;background:#d6d6d6;"></div>
<div style="left:210.00px;top:601.16px;width:1.00px;height:32.27px;background:#d6d6d6;"></div>
<div style="left:266.00px;top:601.16px;width:1.00px;height:32.27px;background:#d6d6d6;"></div>
<div style="left:337.50px;top:601.16px;width:1.00px;height:32.27px;background:#d6d6d6;"></div>
<div style="left:436.00px;top:601.16px;width:1.00px;height:32.27px;background:#d6d6d6;"></div>
<div style="left:549.00px;top:601.16px;width:1.00px;height:32.27px;background:#d6d6d6;"></div>
<div style="left:589.00px;top:601.16px;width:1.00px;height:32.27px;background:#d6d6d6;"></div>
<div style="left:687.50px;top:601.16px;width:1.00px;height:32.27px;background:#d6d6d6;"></div>
<div style="left:9.40px;top:632.93px;width:678.60px;height:1.00px;background:#d6d6d6;"></div>
<div style="left:28.10px;top:633.43px;width:1.00px;height:32.27px;background:#d6d6d6;"></div>
<div style="left:210.00px;top:633.43px;width:1.00px;height:32.27px;background:#d6d6d6;"></div>
<div style="left:266.00px;top:633.43px;width:1.00px;height:32.27px;background:#d6d6d6;"></div>
<div style="left:337.50px;top:633.43px;width:1.00px;height:32.27px;background:#d6d6d6;"></div>
<div style="left:436.00px;top:633.43px;width:1.00px;height:32.27px;background:#d6d6d6;"></div>
<div style="left:549.00px;top:633.43px;width:1.00px;height:32.27px;background:#d6d6d6;"></div>
<div style="left:589.00px;top:633.43px;width:1.00px;height:32.27px;background:#d6d6d6;"></div>
<div style="left:687.50px;top:633.43px;width:1.00px;height:32.27px;background:#d6d6d6;"></div>
<div style="left:9.40px;top:665.20px;width:678.60px;height:1.00px;background:#d6d6d6;"></div>
<div style="left:28.10px;top:665.70px;width:1.00px;height:32.27px;background:#d6d6d6;"></div>
<div style="left:210.00px;top:665.70px;width:1.00px;height:32.27px;background:#d6d6d6;"></div>
<div style="left:266.00px;top:665.70px;width:1.00px;height:32.27px;background:#d6d6d6;"></div>
<div style="left:337.50px;top:665.70px;width:1.00px;height:32.27px;background:#d6d6d6;"></div>
<div style="left:436.00px;top:665.70px;width:1.00px;height:32.27px;background:#d6d6d6;"></div>
<div style="left:549.00px;top:665.70px;width:1.00px;height:32.27px;background:#d6d6d6;"></div>
<div style="left:589.00px;top:665.70px;width:1.00px;height:32.27px;background:#d6d6d6;"></div>
<div style="left:687.50px;top:665.70px;width:1.00px;height:32.27px;background:#d6d6d6;"></div>
<div style="left:28.10px;top:712.27px;width:1.00px;height:32.27px;background:#d6d6d6;"></div>
<div style="left:210.00px;top:712.27px;width:1.00px;height:32.27px;background:#d6d6d6;"></div>
<div style="left:266.00px;top:712.27px;width:1.00px;height:32.27px;background:#d6d6d6;"></div>
<div style="left:337.50px;top:712.27px;width:1.00px;height:32.27px;background:#d6d6d6;"></div>
<div style="left:436.00px;top:712.27px;width:1.00px;height:32.27px;background:#d6d6d6;"></div>
<div style="left:549.00px;top:712.27px;width:1.00px;height:32.27px;background:#d6d6d6;"></div>
<div style="left:589.00px;top:712.27px;width:1.00px;height:32.27px;background:#d6d6d6;"></div>
<div style="left:687.50px;top:712.27px;width:1.00px;height:32.27px;background:#d6d6d6;"></div>
<div style="left:9.40px;top:744.04px;width:678.60px;height:1.00px;background:#d6d6d6;"></div>
<div style="left:28.10px;top:744.54px;width:1.00px;height:27.86px;background:#d6d6d6;"></div>
<div style="left:210.00px;top:744.54px;width:1.00px;height:27.86px;background:#d6d6d6;"></div>
<div style="left:266.00px;top:744.54px;width:1.00px;height:27.86px;background:#d6d6d6;"></div>
<div style="left:337.50px;top:744.54px;width:1.00px;height:27.86px;background:#d6d6d6;"></div>
<div style="left:436.00px;top:744.54px;width:1.00px;height:27.86px;background:#d6d6d6;"></div>
<div style="left:549.00px;top:744.54px;width:1.00px;height:27.86px;background:#d6d6d6;"></div>
<div style="left:589.00px;top:744.54px;width:1.00px;height:27.86px;background:#d6d6d6;"></div>
<div style="left:687.50px;top:744.54px;width:1.00px;height:27.86px;background:#d6d6d6;"></div>
<div style="left:337.10px;top:438.91px;width:100.30px;height:34.07px;border:1.7px solid #1d7a48;"></div>
<div style="left:435.20px;top:470.78px;width:3.20px;height:3.20px;background:#107c41;box-shadow:0 0 0 0.7px #fff;"></div>
</div></div>
<!-- ===== tabs / status ===== -->
<div id="tabbar" style="left:0;top:772.4px;width:1024px;height:21.6px;background:#f0f0f0;"></div>
<svg style="left:14.80px;top:779.60px;width:4.80px;height:6.60px" viewBox="0 0 4.8 6.6"><path d="M4.2 0.4L0.8 3.3L4.2 6.2" fill="none" stroke="#9a9a9a" stroke-width="0.9" stroke-linecap="round"/></svg>
<svg style="left:36.70px;top:779.60px;width:4.80px;height:6.60px" viewBox="0 0 4.8 6.6"><path d="M0.6 0.4L4 3.3L0.6 6.2" fill="none" stroke="#9a9a9a" stroke-width="0.9" stroke-linecap="round"/></svg>
<div style="left:73.70px;top:775.00px;width:93.30px;height:16.20px;background:#1b2a4a;border-radius:3px;"></div>
<span class="t" style="font-size:11.25px;color:#fff;transform:translate(80.00px,780.32px) scale(0.8149,0.8000);">Disclaimer &amp; Usage</span>
<div style="left:169.70px;top:777.00px;width:1.00px;height:13.00px;background:#dcdcdc;"></div>
<div style="left:173.30px;top:775.00px;width:57.00px;height:16.20px;background:#1b2a4a;border-radius:3px;"></div>
<span class="t" style="font-size:11.25px;color:#fff;transform:translate(179.50px,780.32px) scale(0.8157,0.8000);">Dashboard</span>
<div style="left:232.90px;top:777.00px;width:1.00px;height:13.00px;background:#dcdcdc;"></div>
<div style="left:236.20px;top:775.00px;width:50.70px;height:16.20px;background:#1b2a4a;border-radius:3px;"></div>
<span class="t" style="font-size:11.25px;color:#fff;transform:translate(242.50px,780.32px) scale(0.8125,0.8000);">Overview</span>
<div style="left:289.30px;top:777.00px;width:1.00px;height:13.00px;background:#dcdcdc;"></div>
<div style="left:293.00px;top:771.60px;width:101.00px;height:19.00px;background:linear-gradient(#f6f6f6 0%,#f1f2f3 45%,#c9d6e4 100%);border-radius:0 0 4px 4px;box-shadow:0 0 1.5px rgba(0,0,0,0.25);"></div>
<span class="t" style="font-size:11.25px;color:#2a2a2a;font-weight:bold;transform:translate(298.60px,778.02px) scale(0.7519,0.8000);">Assessment Checklist</span>
<div style="left:298.60px;top:787.50px;width:89.80px;height:1.60px;background:#107c41;border-radius:1px;"></div>
<div style="left:400.20px;top:775.00px;width:103.60px;height:16.20px;background:#2e7d32;border-radius:3px;"></div>
<span class="t" style="font-size:11.25px;color:#fff;transform:translate(408.00px,780.32px) scale(0.7999,0.8000);">Framework Crosswalk</span>
<div style="left:506.40px;top:777.00px;width:1.00px;height:13.00px;background:#dcdcdc;"></div>
<div style="left:509.50px;top:775.00px;width:87.30px;height:16.20px;background:#c00000;border-radius:3px;"></div>
<span class="t" style="font-size:11.25px;color:#fff;transform:translate(516.50px,780.32px) scale(0.8292,0.8000);">Regulatory Watch</span>
<div style="left:602.70px;top:775.00px;width:68.90px;height:16.20px;background:#8b4513;border-radius:3px;"></div>
<span class="t" style="font-size:11.25px;color:#fff;transform:translate(609.00px,780.32px) scale(0.8724,0.8000);">Methodology</span>
<div style="left:673.90px;top:776.00px;width:1.00px;height:14.50px;background:#c8c8c8;"></div>
<svg style="left:703.20px;top:779.30px;width:7.00px;height:7.20px" viewBox="0 0 7 7.2"><path d="M3.5 0.2V7M0.2 3.6H6.8" stroke="#444" stroke-width="0.85"/></svg>
<svg style="left:750.00px;top:780.00px;width:2.00px;height:7.20px" viewBox="0 0 2 7.2"><circle cx="1" cy="0.9" r="0.75" fill="#444"/><circle cx="1" cy="3.6" r="0.75" fill="#444"/><circle cx="1" cy="6.3" r="0.75" fill="#444"/></svg>
<div style="left:762.50px;top:777.50px;width:277.50px;height:11.00px;background:#f7f7f7;border-radius:5.5px;"></div>
<svg style="left:765.80px;top:780.00px;width:4.00px;height:5.80px" viewBox="0 0 4 5.8"><path d="M3.8 0.2V5.6L0.3 2.9Z" fill="#444"/></svg>
<div style="left:773.60px;top:780.00px;width:266.40px;height:6.00px;background:#7f7f7f;border-radius:3px;"></div>
<div id="status" style="left:0;top:793.8px;width:1024px;height:14.4px;background:#f3f3f3;"></div>
<span class="t" style="font-size:9.5px;color:#1c1c1c;transform:translate(3.90px,798.38px) scale(0.7427,0.8000);">Ready</span>
<svg style="left:37.00px;top:795.60px;width:10.40px;height:10.60px" viewBox="0 0 10.4 10.6"><circle cx="4.4" cy="1.6" r="1" fill="none" stroke="#3a3a3a" stroke-width="0.8"/>
<path d="M0.5 3.1C2.4 3.9 6.4 3.9 8.3 3.1" fill="none" stroke="#3a3a3a" stroke-width="0.95" stroke-linecap="round"/>
<path d="M3.3 3.7V6L2.2 9.8M5.5 3.7V5.4" fill="none" stroke="#3a3a3a" stroke-width="0.9" stroke-linecap="round"/>
<path d="M4.6 5.6L9.6 10.2M9.6 5.6L4.6 10.2" fill="none" stroke="#3a3a3a" stroke-width="0.85" stroke-linecap="round"/></svg>
<span class="t" style="font-size:9.5px;color:#2a2a2a;font-weight:bold;transform:translate(50.20px,798.38px) scale(0.7381,0.8000);">Accessibility: Investigate</span>
<div style="left:0.00px;top:808.20px;width:1024.00px;height:1.80px;background:linear-gradient(90deg,#4a6a3a 0,#556b2f 8%,#2e4420 20%,#3a4a1e 35%,#2b4520 50%,#4f8f70 50.6%,#5a9a7a 100%);"></div>
<div style="left:0.00px;top:807.50px;width:1024.00px;height:1.00px;background:#a8d4be;"></div>
</body></html>
